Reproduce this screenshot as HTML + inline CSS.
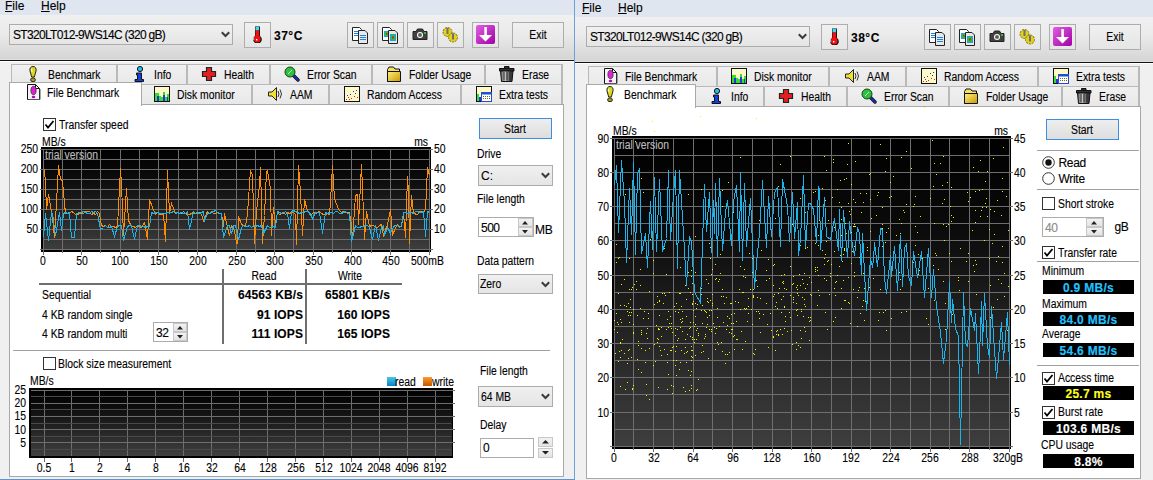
<!DOCTYPE html><html><head><meta charset="utf-8"><style>
html,body{margin:0;padding:0;}
body{width:1153px;height:480px;overflow:hidden;position:relative;background:#f0f0f0;font-family:"Liberation Sans",sans-serif;}
.r{position:absolute;display:block;}
.t{position:absolute;white-space:nowrap;line-height:normal;font-family:"Liberation Sans",sans-serif;-webkit-text-stroke:0.12px currentColor;}
</style></head><body>
<div class="r" style="left:0px;top:0px;width:574px;height:15px;background:#dfe6f0;"></div>
<div class="t" style="left:5px;top:-1px;font-size:12px;color:#000;"><u>F</u>ile</div>
<div class="t" style="left:41px;top:-1px;font-size:12px;color:#000;"><u>H</u>elp</div>
<div class="r" style="left:0px;top:15px;width:574px;height:44px;background:linear-gradient(#f0f0f0 0%,#ebebeb 40%,#d5d5d5 100%);"></div>
<div class="r" style="left:0px;top:59px;width:574px;height:1px;background:#e0e0e0;"></div>
<div class="r" style="left:0px;top:60px;width:574px;height:1px;background:#111;"></div>
<div class="r" style="left:0px;top:61px;width:574px;height:1px;background:#fff;"></div>
<div class="r" style="left:0px;top:62px;width:574px;height:418px;background:#f0f0f0;"></div>
<div class="r" style="left:9px;top:24px;width:224px;height:21px;box-sizing:border-box;border:1px solid #acacac;background:linear-gradient(#f0f0f0,#e5e5e5);"></div>
<div class="t" style="left:13px;top:28px;font-size:12px;color:#000;letter-spacing:-0.68px;">ST320LT012-9WS14C (320 gB)</div>
<svg class="r" style="left:221px;top:31px;" width="9" height="7" viewBox="0 0 9 7"><path d="M0.8 1.3 L4.5 5 L8.2 1.3" fill="none" stroke="#3a3a3a" stroke-width="2"/></svg>
<div class="r" style="left:244px;top:22px;width:27px;height:26px;box-sizing:border-box;border:1px solid #adadad;background:linear-gradient(#f0f0f0,#e5e5e5);"></div>
<svg class="r" style="left:252px;top:26px;" width="11" height="17" viewBox="0 0 11 17"><path d="M3 0.5 H8 V10 A4.3 4.3 0 1 1 3 10 Z" fill="#111"/><rect x="3.5" y="1" width="3.6" height="3.5" fill="#30e0f0"/><rect x="3.5" y="4.5" width="3.6" height="7" fill="#f01010"/><circle cx="5.2" cy="13" r="3.4" fill="#f01010"/><path d="M1.6 11.5 L1.6 14" stroke="#60e0f0" stroke-width="1"/><rect x="4" y="13" width="1.4" height="1.4" fill="#fff"/></svg>
<div class="t" style="left:274px;top:29px;font-size:12px;color:#000;font-weight:bold;letter-spacing:0.5px;">37°C</div>
<div class="r" style="left:347px;top:22px;width:27px;height:26px;box-sizing:border-box;border:1px solid #adadad;background:linear-gradient(#f0f0f0,#e5e5e5);"></div>
<svg class="r" style="left:352px;top:26px;" width="17" height="19" viewBox="0 0 17 19"><path d="M0.5 1.5 H7.5 L9.5 3.5 V14.5 H0.5 Z" fill="#fff" stroke="#222" stroke-width="1"/><path d="M2 5.5 H6 M2 7.5 H6 M2 9.5 H6" stroke="#2080e0" stroke-width="1"/><path d="M6.5 4.5 H13 L15.5 7 V17.5 H6.5 Z" fill="#e8e8e8" stroke="#222" stroke-width="1"/><path d="M8 9.5 H14 M8 11.5 H14 M8 13.5 H14" stroke="#2080e0" stroke-width="1"/></svg>
<div class="r" style="left:377px;top:22px;width:27px;height:26px;box-sizing:border-box;border:1px solid #adadad;background:linear-gradient(#f0f0f0,#e5e5e5);"></div>
<svg class="r" style="left:382px;top:26px;" width="17" height="19" viewBox="0 0 17 19"><path d="M0.5 1.5 H7.5 L9.5 3.5 V14.5 H0.5 Z" fill="#fff" stroke="#222" stroke-width="1"/><rect x="2" y="5" width="5" height="6" fill="#20a0e0"/><rect x="3" y="6" width="3" height="4" fill="#30c030"/><rect x="4" y="7" width="1.5" height="1.5" fill="#e02020"/><path d="M6.5 4.5 H13 L15.5 7 V17.5 H6.5 Z" fill="#e8e8e8" stroke="#222" stroke-width="1"/><rect x="8" y="8" width="6" height="7" fill="#20a0e0"/><rect x="9" y="9" width="4" height="5" fill="#30c030"/><rect x="10" y="10.5" width="2" height="2" fill="#e02020"/></svg>
<div class="r" style="left:407px;top:22px;width:27px;height:26px;box-sizing:border-box;border:1px solid #adadad;background:linear-gradient(#f0f0f0,#e5e5e5);"></div>
<svg class="r" style="left:412px;top:26px;" width="17" height="19" viewBox="0 0 17 19"><path d="M1 5.5 H4 L5.5 3 H10.5 L12 5.5 H15 V13.5 H1 Z" fill="#404040" stroke="#222" stroke-width="1"/><circle cx="8" cy="9" r="3" fill="#fff"/><circle cx="8" cy="9" r="2" fill="#606060"/><circle cx="13" cy="7" r="1" fill="#30e030"/></svg>
<div class="r" style="left:437px;top:22px;width:27px;height:26px;box-sizing:border-box;border:1px solid #adadad;background:linear-gradient(#f0f0f0,#e5e5e5);"></div>
<svg class="r" style="left:442px;top:26px;" width="17" height="19" viewBox="0 0 17 19"><circle cx="5.5" cy="6" r="4.5" fill="#e0d020" stroke="#807010" stroke-width="1" stroke-dasharray="2 1"/><circle cx="11" cy="11.5" r="4.5" fill="#e0d020" stroke="#807010" stroke-width="1" stroke-dasharray="2 1"/><path d="M5.5 2 V8 M11 7.5 V13.5" stroke="#707070" stroke-width="2"/></svg>
<div class="r" style="left:472px;top:22px;width:27px;height:26px;box-sizing:border-box;border:1px solid #adadad;background:linear-gradient(#f0f0f0,#e5e5e5);"></div>
<svg class="r" style="left:476px;top:25px;" width="19" height="19" viewBox="0 0 19 19"><defs><linearGradient id="pg" x1="0" y1="0" x2="1" y2="1"><stop offset="0" stop-color="#e060e0"/><stop offset="1" stop-color="#a000a8"/></linearGradient></defs><rect x="0" y="0" width="19" height="19" rx="2" fill="url(#pg)"/><rect x="8.3" y="2" width="2.6" height="9" fill="#fff"/><path d="M3 10 H16 L9.5 16.5 Z" fill="#fff"/></svg>
<div class="r" style="left:512px;top:22px;width:52px;height:26px;box-sizing:border-box;border:1px solid #adadad;background:linear-gradient(#f0f0f0,#e5e5e5);"></div>
<div class="t" style="left:338px;width:400px;text-align:center;top:28px;font-size:12px;color:#000;transform:scaleX(0.865);transform-origin:center top;">Exit</div>
<div class="r" style="left:11px;top:64px;width:107px;height:21px;box-sizing:border-box;border:1px solid #b9b9b9;border-bottom:none;background:linear-gradient(#f0f0f0,#e8e8e8);"></div>
<div class="r" style="left:116px;top:64px;width:1px;height:21px;background:#b9b9b9;"></div>
<svg class="r" style="left:25px;top:66px;" width="16" height="16" viewBox="0 0 16 16"><path d="M8 0.5 C10.5 0.5 11.5 2.5 11 5 L9.3 11 H6.7 L5 5 C4.5 2.5 5.5 0.5 8 0.5 Z" fill="#dcd820" stroke="#222" stroke-width="1"/><path d="M6.5 3 L7 6" stroke="#fffff0" stroke-width="1"/><ellipse cx="8" cy="13.8" rx="2.4" ry="1.9" fill="#aaa010" stroke="#222" stroke-width="1"/></svg>
<div class="t" style="left:47.5px;top:68px;font-size:12px;color:#000;transform:scaleX(0.865);transform-origin:left top;">Benchmark</div>
<div class="r" style="left:117px;top:64px;width:71px;height:21px;box-sizing:border-box;border:1px solid #b9b9b9;border-bottom:none;background:linear-gradient(#f0f0f0,#e8e8e8);"></div>
<div class="r" style="left:186px;top:64px;width:1px;height:21px;background:#b9b9b9;"></div>
<svg class="r" style="left:131px;top:66px;" width="16" height="16" viewBox="0 0 16 16"><circle cx="9" cy="3" r="2.6" fill="#20c0f0" stroke="#111" stroke-width="1"/><path d="M5.5 7 H10.5 V13.5 H12.5 V15.5 H4 V13.5 H6.5 V9 H5.5 Z" fill="#1040e0" stroke="#111" stroke-width="1"/></svg>
<div class="t" style="left:153.5px;top:68px;font-size:12px;color:#000;transform:scaleX(0.865);transform-origin:left top;">Info</div>
<div class="r" style="left:187px;top:64px;width:84px;height:21px;box-sizing:border-box;border:1px solid #b9b9b9;border-bottom:none;background:linear-gradient(#f0f0f0,#e8e8e8);"></div>
<div class="r" style="left:269px;top:64px;width:1px;height:21px;background:#b9b9b9;"></div>
<svg class="r" style="left:201px;top:66px;" width="16" height="16" viewBox="0 0 16 16"><path d="M5.5 1.5 H10.5 V5.5 H14.5 V10.5 H10.5 V14.5 H5.5 V10.5 H1.5 V5.5 H5.5 Z" fill="#e02020" stroke="#222" stroke-width="1.2"/></svg>
<div class="t" style="left:223.5px;top:68px;font-size:12px;color:#000;transform:scaleX(0.865);transform-origin:left top;">Health</div>
<div class="r" style="left:270px;top:64px;width:103px;height:21px;box-sizing:border-box;border:1px solid #b9b9b9;border-bottom:none;background:linear-gradient(#f0f0f0,#e8e8e8);"></div>
<div class="r" style="left:371px;top:64px;width:1px;height:21px;background:#b9b9b9;"></div>
<svg class="r" style="left:284px;top:66px;" width="16" height="16" viewBox="0 0 16 16"><path d="M8.5 8.5 L14 14" stroke="#111" stroke-width="3.4" stroke-linecap="round"/><path d="M8.5 8.5 L14 14" stroke="#1830b0" stroke-width="2" stroke-linecap="round"/><circle cx="6" cy="6" r="5" fill="#30c040" stroke="#184018" stroke-width="1"/><path d="M4 8 L8 4" stroke="#b0ffb0" stroke-width="1"/></svg>
<div class="t" style="left:306.5px;top:68px;font-size:12px;color:#000;transform:scaleX(0.865);transform-origin:left top;">Error Scan</div>
<div class="r" style="left:372px;top:64px;width:114px;height:21px;box-sizing:border-box;border:1px solid #b9b9b9;border-bottom:none;background:linear-gradient(#f0f0f0,#e8e8e8);"></div>
<div class="r" style="left:484px;top:64px;width:1px;height:21px;background:#b9b9b9;"></div>
<svg class="r" style="left:386px;top:66px;" width="16" height="16" viewBox="0 0 16 16"><defs><linearGradient id="fg" x1="0" y1="0" x2="1" y2="1"><stop offset="0" stop-color="#fff080"/><stop offset="1" stop-color="#c89800"/></linearGradient></defs><path d="M1.5 3.5 L3 1 H7.5 L9 3 H13.5 V15.5 H1.5 Z" fill="#f8e060" stroke="#111" stroke-width="1"/><path d="M1.5 5.5 H14.5 V15.5 H1.5 Z" fill="url(#fg)" stroke="#111" stroke-width="1"/></svg>
<div class="t" style="left:408.5px;top:68px;font-size:12px;color:#000;transform:scaleX(0.865);transform-origin:left top;">Folder Usage</div>
<div class="r" style="left:485px;top:64px;width:78px;height:21px;box-sizing:border-box;border:1px solid #b9b9b9;border-bottom:none;background:linear-gradient(#f0f0f0,#e8e8e8);"></div>
<div class="r" style="left:561px;top:64px;width:1px;height:21px;background:#b9b9b9;"></div>
<svg class="r" style="left:499px;top:66px;" width="16" height="16" viewBox="0 0 16 16"><defs><linearGradient id="tg" x1="0" x2="1"><stop offset="0" stop-color="#505050"/><stop offset="0.35" stop-color="#d0d0d0"/><stop offset="0.7" stop-color="#606060"/><stop offset="1" stop-color="#202020"/></linearGradient></defs><path d="M0.5 2.5 H15 V5 H0.5 Z" fill="#333" stroke="#111" stroke-width="1"/><path d="M5.5 0.5 H10 V2.5 H5.5 Z" fill="#333" stroke="#111" stroke-width="1"/><path d="M1.5 5 H14 L13 15.5 H2.5 Z" fill="url(#tg)" stroke="#111" stroke-width="1"/><path d="M5 6 V14.5 M8 6 V14.5 M11 6 V14.5" stroke="#222" stroke-width="1"/></svg>
<div class="t" style="left:521.5px;top:68px;font-size:12px;color:#000;transform:scaleX(0.865);transform-origin:left top;">Erase</div>
<div class="r" style="left:140px;top:84px;width:113px;height:21px;box-sizing:border-box;border:1px solid #b9b9b9;border-bottom:none;background:linear-gradient(#f0f0f0,#e8e8e8);"></div>
<div class="r" style="left:251px;top:84px;width:1px;height:21px;background:#b9b9b9;"></div>
<svg class="r" style="left:154px;top:86px;" width="16" height="16" viewBox="0 0 16 16"><rect x="0.5" y="0.5" width="15" height="15" fill="#fdfac8" stroke="#111" stroke-width="1"/><path d="M1 7 V15 H15 V8 H13 V11 H11 V6 H9 V11 H7 V10 H5 V7 Z" fill="#30e030"/><path d="M3 15 V10 H5 V15 M9 15 V9 H11 V15 M13 15 V11 H14 V15" fill="#3030e0"/><rect x="0.5" y="0.5" width="15" height="15" fill="none" stroke="#111" stroke-width="1"/></svg>
<div class="t" style="left:176.5px;top:88px;font-size:12px;color:#000;transform:scaleX(0.865);transform-origin:left top;">Disk monitor</div>
<div class="r" style="left:252px;top:84px;width:78px;height:21px;box-sizing:border-box;border:1px solid #b9b9b9;border-bottom:none;background:linear-gradient(#f0f0f0,#e8e8e8);"></div>
<div class="r" style="left:328px;top:84px;width:1px;height:21px;background:#b9b9b9;"></div>
<svg class="r" style="left:267px;top:86px;" width="16" height="16" viewBox="0 0 16 16"><path d="M1.5 6 H5 L9.5 1.5 V14.5 L5 10 H1.5 Z" fill="#f0e030" stroke="#222" stroke-width="1"/><path d="M11 5 Q13 8 11 11 M13 3.5 Q16 8 13 12.5" fill="none" stroke="#333" stroke-width="1"/></svg>
<div class="t" style="left:289.5px;top:88px;font-size:12px;color:#000;transform:scaleX(0.865);transform-origin:left top;">AAM</div>
<div class="r" style="left:329px;top:84px;width:133px;height:21px;box-sizing:border-box;border:1px solid #b9b9b9;border-bottom:none;background:linear-gradient(#f0f0f0,#e8e8e8);"></div>
<div class="r" style="left:460px;top:84px;width:1px;height:21px;background:#b9b9b9;"></div>
<svg class="r" style="left:344px;top:86px;" width="16" height="16" viewBox="0 0 16 16"><rect x="0.5" y="0.5" width="15" height="15" fill="#fdfac8" stroke="#111" stroke-width="1"/><g fill="#2030e0"><rect x="3" y="9" width="1" height="1"/><rect x="6" y="8" width="1" height="1"/><rect x="9" y="5" width="1" height="1"/><rect x="12" y="4" width="1" height="1"/><rect x="11" y="7" width="1" height="1"/></g><g fill="#e02020"><rect x="2" y="13" width="1" height="1"/><rect x="4" y="11" width="1" height="1"/><rect x="7" y="12" width="1" height="1"/><rect x="10" y="10" width="1" height="1"/><rect x="13" y="11" width="1" height="1"/><rect x="5" y="13" width="1" height="1"/></g></svg>
<div class="t" style="left:366.5px;top:88px;font-size:12px;color:#000;transform:scaleX(0.865);transform-origin:left top;">Random Access</div>
<div class="r" style="left:461px;top:84px;width:102px;height:21px;box-sizing:border-box;border:1px solid #b9b9b9;border-bottom:none;background:linear-gradient(#f0f0f0,#e8e8e8);"></div>
<div class="r" style="left:561px;top:84px;width:1px;height:21px;background:#b9b9b9;"></div>
<svg class="r" style="left:476px;top:86px;" width="16" height="16" viewBox="0 0 16 16"><rect x="0.5" y="0.5" width="15" height="15" fill="#fdfac8" stroke="#111" stroke-width="1"/><path d="M1 8 H3 V15 H1 Z" fill="#30e030"/><path d="M3 11 H5 V15 H3 Z" fill="#3030e0"/><rect x="5.5" y="6.5" width="10" height="9" fill="#fff" stroke="#2050d0" stroke-width="1"/><rect x="5.5" y="6.5" width="10" height="2" fill="#2050d0"/><g fill="#e02020"><rect x="7" y="10" width="1" height="1"/><rect x="11" y="10" width="1" height="1"/><rect x="9" y="12" width="1" height="1"/><rect x="13" y="12" width="1" height="1"/></g><g fill="#20a020"><rect x="9" y="10" width="1" height="1"/><rect x="13" y="10" width="1" height="1"/><rect x="7" y="12" width="1" height="1"/><rect x="11" y="12" width="1" height="1"/></g></svg>
<div class="t" style="left:498.5px;top:88px;font-size:12px;color:#000;transform:scaleX(0.865);transform-origin:left top;">Extra tests</div>
<div class="r" style="left:9px;top:104px;width:555px;height:373px;box-sizing:border-box;border:1px solid #a8a8a8;background:#fff;"></div>
<div class="r" style="left:9px;top:82px;width:133px;height:24px;box-sizing:border-box;border:1px solid #a9a9a9;border-bottom:none;background:#fff;"></div>
<svg class="r" style="left:25px;top:84px;" width="16" height="16" viewBox="0 0 16 16"><path d="M2.5 0.5 H10.5 L14.5 4.5 V15.5 H2.5 Z" fill="#f4f4f4" stroke="#111" stroke-width="1"/><path d="M10.5 0.5 V4.5 H14.5" fill="none" stroke="#111" stroke-width="1"/><ellipse cx="8.5" cy="6.5" rx="2.6" ry="4.2" fill="#e020d8" stroke="#333" stroke-width="0.8"/><ellipse cx="8.5" cy="13" rx="1.8" ry="1.2" fill="#b010b0"/><path d="M3.5 15.5 H15 V5" fill="none" stroke="#555" stroke-width="1"/></svg>
<div class="t" style="left:47.0px;top:85.5px;font-size:12px;color:#000;transform:scaleX(0.865);transform-origin:left top;">File Benchmark</div>
<div class="r" style="left:43px;top:118px;width:13px;height:13px;box-sizing:border-box;border:1px solid #333;background:#fff;"></div>
<svg class="r" style="left:43px;top:118px;" width="13" height="13" viewBox="0 0 13 13"><path d="M2.5 6.5 L5 9.5 L10.5 3" fill="none" stroke="#000" stroke-width="1.8"/></svg>
<div class="t" style="left:59px;top:118px;font-size:12px;color:#000;transform:scaleX(0.865);transform-origin:left top;">Transfer speed</div>
<div class="t" style="left:42px;top:135px;font-size:12px;color:#000;transform:scaleX(0.865);transform-origin:left top;">MB/s</div>
<div class="t" style="left:28px;width:400px;text-align:right;top:135px;font-size:12px;color:#000;transform:scaleX(0.865);transform-origin:right top;">ms</div>
<div class="r" style="left:41px;top:147px;width:390px;height:105px;background:#000;"></div>
<div class="r" style="left:43px;top:149px;width:387px;height:101px;background:linear-gradient(#000 0%,#0c0c0c 30%,#3e3e3e 100%);"></div>
<svg class="r" style="left:0px;top:0px;" width="480" height="260" viewBox="0 0 480 260"><rect x="43" y="149" width="1" height="106" fill="#6e6e6e"/><rect x="62" y="149" width="1" height="104" fill="#6e6e6e"/><rect x="81" y="149" width="1" height="106" fill="#6e6e6e"/><rect x="100" y="149" width="1" height="104" fill="#6e6e6e"/><rect x="120" y="149" width="1" height="106" fill="#6e6e6e"/><rect x="139" y="149" width="1" height="104" fill="#6e6e6e"/><rect x="158" y="149" width="1" height="106" fill="#6e6e6e"/><rect x="178" y="149" width="1" height="104" fill="#6e6e6e"/><rect x="197" y="149" width="1" height="106" fill="#6e6e6e"/><rect x="216" y="149" width="1" height="104" fill="#6e6e6e"/><rect x="236" y="149" width="1" height="106" fill="#6e6e6e"/><rect x="255" y="149" width="1" height="104" fill="#6e6e6e"/><rect x="274" y="149" width="1" height="106" fill="#6e6e6e"/><rect x="293" y="149" width="1" height="104" fill="#6e6e6e"/><rect x="313" y="149" width="1" height="106" fill="#6e6e6e"/><rect x="332" y="149" width="1" height="104" fill="#6e6e6e"/><rect x="351" y="149" width="1" height="106" fill="#6e6e6e"/><rect x="371" y="149" width="1" height="104" fill="#6e6e6e"/><rect x="390" y="149" width="1" height="106" fill="#6e6e6e"/><rect x="409" y="149" width="1" height="104" fill="#6e6e6e"/><rect x="429" y="149" width="1" height="106" fill="#6e6e6e"/><rect x="40" y="149" width="393" height="1" fill="#6e6e6e"/><rect x="43" y="159" width="387" height="1" fill="#6e6e6e"/><rect x="40" y="169" width="393" height="1" fill="#6e6e6e"/><rect x="43" y="179" width="387" height="1" fill="#6e6e6e"/><rect x="40" y="189" width="393" height="1" fill="#6e6e6e"/><rect x="43" y="199" width="387" height="1" fill="#6e6e6e"/><rect x="40" y="209" width="393" height="1" fill="#6e6e6e"/><rect x="43" y="219" width="387" height="1" fill="#6e6e6e"/><rect x="40" y="229" width="393" height="1" fill="#6e6e6e"/><rect x="43" y="239" width="387" height="1" fill="#6e6e6e"/><rect x="40" y="249" width="393" height="1" fill="#6e6e6e"/></svg>
<div class="r" style="left:41px;top:250px;width:390px;height:2px;background:#000;"></div>
<div class="r" style="left:43px;top:250px;width:1px;height:5px;background:#6e6e6e;"></div>
<div class="r" style="left:62px;top:250px;width:1px;height:3px;background:#6e6e6e;"></div>
<div class="r" style="left:81px;top:250px;width:1px;height:5px;background:#6e6e6e;"></div>
<div class="r" style="left:100px;top:250px;width:1px;height:3px;background:#6e6e6e;"></div>
<div class="r" style="left:120px;top:250px;width:1px;height:5px;background:#6e6e6e;"></div>
<div class="r" style="left:139px;top:250px;width:1px;height:3px;background:#6e6e6e;"></div>
<div class="r" style="left:158px;top:250px;width:1px;height:5px;background:#6e6e6e;"></div>
<div class="r" style="left:178px;top:250px;width:1px;height:3px;background:#6e6e6e;"></div>
<div class="r" style="left:197px;top:250px;width:1px;height:5px;background:#6e6e6e;"></div>
<div class="r" style="left:216px;top:250px;width:1px;height:3px;background:#6e6e6e;"></div>
<div class="r" style="left:236px;top:250px;width:1px;height:5px;background:#6e6e6e;"></div>
<div class="r" style="left:255px;top:250px;width:1px;height:3px;background:#6e6e6e;"></div>
<div class="r" style="left:274px;top:250px;width:1px;height:5px;background:#6e6e6e;"></div>
<div class="r" style="left:293px;top:250px;width:1px;height:3px;background:#6e6e6e;"></div>
<div class="r" style="left:313px;top:250px;width:1px;height:5px;background:#6e6e6e;"></div>
<div class="r" style="left:332px;top:250px;width:1px;height:3px;background:#6e6e6e;"></div>
<div class="r" style="left:351px;top:250px;width:1px;height:5px;background:#6e6e6e;"></div>
<div class="r" style="left:371px;top:250px;width:1px;height:3px;background:#6e6e6e;"></div>
<div class="r" style="left:390px;top:250px;width:1px;height:5px;background:#6e6e6e;"></div>
<div class="r" style="left:409px;top:250px;width:1px;height:3px;background:#6e6e6e;"></div>
<div class="r" style="left:429px;top:250px;width:1px;height:5px;background:#6e6e6e;"></div>
<div class="t" style="left:45px;top:148px;font-size:12px;color:#bdbdbd;transform:scaleX(0.865);transform-origin:left top;">trial version</div>
<svg class="r" style="left:0px;top:0px;" width="480" height="260" viewBox="0 0 480 260"><clipPath id="lc"><rect x="43" y="149" width="388" height="101"/></clipPath><g clip-path="url(#lc)"><polyline fill="none" stroke="#ff8c00" stroke-width="1.0" shape-rendering="crispEdges" points="44.5,169.5 45.5,184.5 46.5,209.5 48.5,194.5 50.5,205.5 52.5,218.5 54.5,237.5 57.5,184.5 58.5,165.5 60.5,179.5 62.5,180.5 63.5,192.5 65.5,213.5 69.5,213.5 71.5,211.5 73.5,212.5 75.5,214.5 77.5,214.5 79.5,213.5 81.5,213.5 83.5,213.5 85.5,211.5 87.5,211.5 89.5,211.5 91.5,214.5 93.5,213.5 95.5,214.5 97.5,211.5 99.5,213.5 101.5,225.5 103.5,226.5 105.5,225.5 107.5,227.5 109.5,224.5 111.5,226.5 113.5,226.5 115.5,227.5 117.5,226.5 120.5,168.5 121.5,184.5 123.5,235.5 126.5,188.5 128.5,220.5 131.5,226.5 133.5,226.5 135.5,227.5 137.5,225.5 139.5,226.5 141.5,227.5 144.5,222.5 147.5,239.5 149.5,199.5 152.5,207.5 155.5,214.5 157.5,212.5 159.5,214.5 161.5,214.5 163.5,213.5 165.5,241.5 167.5,170.5 169.5,213.5 171.5,203.5 175.5,213.5 177.5,212.5 179.5,213.5 181.5,213.5 183.5,211.5 185.5,213.5 187.5,214.5 189.5,214.5 191.5,213.5 193.5,212.5 195.5,213.5 197.5,213.5 199.5,212.5 201.5,214.5 203.5,220.5 207.5,211.5 209.5,213.5 211.5,211.5 213.5,213.5 215.5,213.5 217.5,212.5 219.5,213.5 221.5,213.5 223.5,226.5 224.5,213.5 227.5,227.5 229.5,235.5 231.5,225.5 234.5,230.5 236.5,243.5 237.5,243.5 238.5,216.5 241.5,224.5 243.5,225.5 245.5,226.5 247.5,213.5 249.5,184.5 250.5,170.5 252.5,175.5 254.5,243.5 256.5,211.5 259.5,184.5 260.5,167.5 262.5,243.5 264.5,215.5 266.5,171.5 267.5,170.5 270.5,188.5 271.5,235.5 273.5,207.5 275.5,224.5 277.5,212.5 279.5,214.5 281.5,213.5 283.5,212.5 285.5,214.5 287.5,212.5 289.5,213.5 291.5,212.5 293.5,212.5 295.5,214.5 296.5,244.5 298.5,165.5 300.5,192.5 302.5,235.5 304.5,199.5 306.5,207.5 309.5,214.5 311.5,214.5 313.5,212.5 315.5,213.5 317.5,212.5 319.5,211.5 321.5,213.5 323.5,214.5 325.5,214.5 327.5,213.5 329.5,214.5 330.5,201.5 332.5,165.5 334.5,198.5 338.5,209.5 341.5,212.5 343.5,211.5 345.5,212.5 347.5,212.5 349.5,212.5 351.5,225.5 352.5,239.5 355.5,195.5 357.5,194.5 358.5,224.5 361.5,164.5 363.5,213.5 364.5,239.5 366.5,211.5 369.5,226.5 371.5,225.5 373.5,225.5 375.5,227.5 377.5,227.5 379.5,225.5 381.5,224.5 383.5,235.5 387.5,224.5 390.5,209.5 392.5,235.5 395.5,227.5 397.5,224.5 399.5,226.5 401.5,226.5 403.5,212.5 405.5,237.5 407.5,176.5 408.5,192.5 409.5,243.5 411.5,195.5 413.5,213.5 417.5,214.5 419.5,211.5 421.5,211.5 423.5,212.5 425.5,209.5 427.5,167.5 429.5,175.5"/><polyline fill="none" stroke="#1cb4ec" stroke-width="1.0" shape-rendering="crispEdges" points="43.5,237.5 45.5,213.5 48.5,240.5 51.5,212.5 52.5,213.5 55.5,235.5 59.5,212.5 61.5,230.5 63.5,213.5 65.5,212.5 67.5,213.5 69.5,212.5 71.5,237.5 74.5,237.5 76.5,213.5 79.5,212.5 81.5,212.5 83.5,211.5 85.5,212.5 87.5,213.5 89.5,213.5 91.5,211.5 93.5,212.5 95.5,211.5 97.5,213.5 100.5,229.5 103.5,227.5 105.5,225.5 107.5,227.5 109.5,227.5 111.5,226.5 114.5,236.5 117.5,226.5 119.5,225.5 121.5,225.5 123.5,240.5 127.5,226.5 129.5,225.5 131.5,225.5 134.5,239.5 137.5,225.5 139.5,225.5 141.5,226.5 143.5,226.5 145.5,227.5 147.5,226.5 149.5,226.5 151.5,212.5 153.5,213.5 155.5,212.5 157.5,212.5 159.5,213.5 161.5,213.5 163.5,213.5 165.5,213.5 167.5,212.5 169.5,212.5 171.5,212.5 173.5,211.5 175.5,213.5 177.5,212.5 179.5,213.5 181.5,212.5 183.5,213.5 185.5,213.5 187.5,211.5 189.5,229.5 193.5,211.5 195.5,213.5 197.5,212.5 199.5,213.5 201.5,212.5 203.5,211.5 204.5,220.5 207.5,213.5 209.5,213.5 211.5,212.5 213.5,211.5 215.5,210.5 217.5,212.5 219.5,213.5 221.5,213.5 223.5,237.5 227.5,225.5 229.5,225.5 231.5,233.5 233.5,225.5 235.5,225.5 238.5,239.5 238.5,239.5 241.5,227.5 243.5,225.5 245.5,226.5 247.5,226.5 249.5,225.5 251.5,227.5 253.5,225.5 255.5,226.5 257.5,225.5 259.5,226.5 261.5,225.5 263.5,233.5 267.5,225.5 269.5,227.5 271.5,227.5 273.5,226.5 275.5,227.5 277.5,211.5 279.5,212.5 281.5,213.5 283.5,213.5 285.5,211.5 287.5,213.5 289.5,228.5 291.5,211.5 293.5,210.5 297.5,212.5 299.5,213.5 301.5,212.5 303.5,212.5 305.5,211.5 307.5,211.5 309.5,212.5 312.5,218.5 315.5,212.5 317.5,212.5 319.5,212.5 322.5,233.5 325.5,212.5 327.5,213.5 329.5,212.5 331.5,212.5 333.5,213.5 335.5,211.5 337.5,211.5 339.5,213.5 341.5,213.5 343.5,212.5 345.5,211.5 347.5,213.5 349.5,213.5 351.5,241.5 355.5,225.5 357.5,227.5 359.5,227.5 361.5,226.5 363.5,226.5 365.5,225.5 367.5,225.5 369.5,227.5 372.5,239.5 375.5,225.5 378.5,240.5 381.5,227.5 383.5,225.5 384.5,235.5 387.5,227.5 390.5,233.5 393.5,226.5 395.5,225.5 397.5,225.5 399.5,227.5 401.5,225.5 403.5,212.5 405.5,212.5 407.5,213.5 409.5,212.5 411.5,212.5 413.5,213.5 415.5,211.5 417.5,211.5 419.5,212.5 421.5,212.5 423.5,211.5 425.5,236.5 427.5,211.5 429.5,212.5"/></g></svg>
<div class="t" style="left:-362.5px;width:400px;text-align:right;top:142px;font-size:12px;color:#000;transform:scaleX(0.865);transform-origin:right top;">250</div>
<div class="t" style="left:-362.5px;width:400px;text-align:right;top:162px;font-size:12px;color:#000;transform:scaleX(0.865);transform-origin:right top;">200</div>
<div class="t" style="left:-362.5px;width:400px;text-align:right;top:182px;font-size:12px;color:#000;transform:scaleX(0.865);transform-origin:right top;">150</div>
<div class="t" style="left:-362.5px;width:400px;text-align:right;top:202px;font-size:12px;color:#000;transform:scaleX(0.865);transform-origin:right top;">100</div>
<div class="t" style="left:-362.5px;width:400px;text-align:right;top:222px;font-size:12px;color:#000;transform:scaleX(0.865);transform-origin:right top;">50</div>
<div class="t" style="left:434px;top:142px;font-size:12px;color:#000;transform:scaleX(0.865);transform-origin:left top;">50</div>
<div class="t" style="left:434px;top:162px;font-size:12px;color:#000;transform:scaleX(0.865);transform-origin:left top;">40</div>
<div class="t" style="left:434px;top:182px;font-size:12px;color:#000;transform:scaleX(0.865);transform-origin:left top;">30</div>
<div class="t" style="left:434px;top:202px;font-size:12px;color:#000;transform:scaleX(0.865);transform-origin:left top;">20</div>
<div class="t" style="left:434px;top:222px;font-size:12px;color:#000;transform:scaleX(0.865);transform-origin:left top;">10</div>
<div class="t" style="left:-157.0px;width:400px;text-align:center;top:253.5px;font-size:12px;color:#000;transform:scaleX(0.865);transform-origin:center top;">0</div>
<div class="t" style="left:-118.3px;width:400px;text-align:center;top:253.5px;font-size:12px;color:#000;transform:scaleX(0.865);transform-origin:center top;">50</div>
<div class="t" style="left:-79.6px;width:400px;text-align:center;top:253.5px;font-size:12px;color:#000;transform:scaleX(0.865);transform-origin:center top;">100</div>
<div class="t" style="left:-40.89999999999998px;width:400px;text-align:center;top:253.5px;font-size:12px;color:#000;transform:scaleX(0.865);transform-origin:center top;">150</div>
<div class="t" style="left:-2.1999999999999886px;width:400px;text-align:center;top:253.5px;font-size:12px;color:#000;transform:scaleX(0.865);transform-origin:center top;">200</div>
<div class="t" style="left:36.5px;width:400px;text-align:center;top:253.5px;font-size:12px;color:#000;transform:scaleX(0.865);transform-origin:center top;">250</div>
<div class="t" style="left:75.20000000000005px;width:400px;text-align:center;top:253.5px;font-size:12px;color:#000;transform:scaleX(0.865);transform-origin:center top;">300</div>
<div class="t" style="left:113.90000000000003px;width:400px;text-align:center;top:253.5px;font-size:12px;color:#000;transform:scaleX(0.865);transform-origin:center top;">350</div>
<div class="t" style="left:152.60000000000002px;width:400px;text-align:center;top:253.5px;font-size:12px;color:#000;transform:scaleX(0.865);transform-origin:center top;">400</div>
<div class="t" style="left:191.3px;width:400px;text-align:center;top:253.5px;font-size:12px;color:#000;transform:scaleX(0.865);transform-origin:center top;">450</div>
<div class="t" style="left:411px;top:253.5px;font-size:12px;color:#000;transform:scaleX(0.865);transform-origin:left top;">500mB</div>
<div class="r" style="left:39px;top:283px;width:363px;height:2px;background:#6e6e6e;"></div>
<div class="r" style="left:222px;top:269px;width:2px;height:75px;background:#6e6e6e;"></div>
<div class="r" style="left:305px;top:269px;width:2px;height:75px;background:#6e6e6e;"></div>
<div class="t" style="left:64px;width:400px;text-align:center;top:268.5px;font-size:12px;color:#000;transform:scaleX(0.865);transform-origin:center top;">Read</div>
<div class="t" style="left:150px;width:400px;text-align:center;top:268.5px;font-size:12px;color:#000;transform:scaleX(0.865);transform-origin:center top;">Write</div>
<div class="t" style="left:42px;top:288px;font-size:12px;color:#000;transform:scaleX(0.865);transform-origin:left top;">Sequential</div>
<div class="t" style="left:41.5px;top:308px;font-size:12px;color:#000;transform:scaleX(0.865);transform-origin:left top;">4 KB random single</div>
<div class="t" style="left:41.5px;top:326.5px;font-size:12px;color:#000;transform:scaleX(0.865);transform-origin:left top;">4 KB random multi</div>
<div class="r" style="left:153px;top:322px;width:35px;height:20px;box-sizing:border-box;border:1px solid #acacac;background:#fff;"></div>
<div class="t" style="left:156px;top:326px;font-size:12px;color:#000;letter-spacing:-0.5px;">32</div>
<div class="r" style="left:173px;top:323px;width:14px;height:9px;box-sizing:border-box;border:1px solid #c8c8c8;background:linear-gradient(#f2f2f2,#e4e4e4);"></div>
<div class="r" style="left:173px;top:332px;width:14px;height:9px;box-sizing:border-box;border:1px solid #c8c8c8;background:linear-gradient(#f2f2f2,#e4e4e4);"></div>
<svg class="r" style="left:176px;top:323px;" width="8" height="18" viewBox="0 0 8 18"><path d="M1 6.5 L4 3.0 L7 6.5 Z" fill="#222"/><path d="M1 12.0 L4 15.5 L7 12.0 Z" fill="#222"/></svg>
<div class="t" style="left:-97px;width:400px;text-align:right;top:288px;font-size:12px;color:#000;font-weight:bold;letter-spacing:0.1px;">64563 KB/s</div>
<div class="t" style="left:-10px;width:400px;text-align:right;top:288px;font-size:12px;color:#000;font-weight:bold;letter-spacing:0.1px;">65801 KB/s</div>
<div class="t" style="left:-97px;width:400px;text-align:right;top:308px;font-size:12px;color:#000;font-weight:bold;letter-spacing:0.1px;">91 IOPS</div>
<div class="t" style="left:-10px;width:400px;text-align:right;top:308px;font-size:12px;color:#000;font-weight:bold;letter-spacing:0.1px;">160 IOPS</div>
<div class="t" style="left:-97px;width:400px;text-align:right;top:326.5px;font-size:12px;color:#000;font-weight:bold;letter-spacing:0.1px;">111 IOPS</div>
<div class="t" style="left:-10px;width:400px;text-align:right;top:326.5px;font-size:12px;color:#000;font-weight:bold;letter-spacing:0.1px;">165 IOPS</div>
<div class="r" style="left:479px;top:118px;width:73px;height:21px;box-sizing:border-box;border:1px solid #3c8ee0;background:linear-gradient(#eeeeee,#dedede);"></div>
<div class="t" style="left:315px;width:400px;text-align:center;top:122px;font-size:12px;color:#000;transform:scaleX(0.865);transform-origin:center top;">Start</div>
<div class="t" style="left:477px;top:147px;font-size:12px;color:#000;transform:scaleX(0.865);transform-origin:left top;">Drive</div>
<div class="r" style="left:478px;top:165px;width:75px;height:21px;box-sizing:border-box;border:1px solid #acacac;background:linear-gradient(#f0f0f0,#e5e5e5);"></div>
<div class="t" style="left:481px;top:169px;font-size:12px;color:#000;">C:</div>
<svg class="r" style="left:541px;top:172px;" width="9" height="7" viewBox="0 0 9 7"><path d="M0.8 1.3 L4.5 5 L8.2 1.3" fill="none" stroke="#3a3a3a" stroke-width="2"/></svg>
<div class="t" style="left:477px;top:192px;font-size:12px;color:#000;transform:scaleX(0.865);transform-origin:left top;">File length</div>
<div class="r" style="left:478px;top:217px;width:56px;height:20px;box-sizing:border-box;border:1px solid #acacac;background:#fff;"></div>
<div class="t" style="left:481px;top:221px;font-size:12px;color:#000;letter-spacing:-0.5px;">500</div>
<div class="r" style="left:518px;top:218px;width:15px;height:9px;box-sizing:border-box;border:1px solid #c8c8c8;background:linear-gradient(#f2f2f2,#e4e4e4);"></div>
<div class="r" style="left:518px;top:227px;width:15px;height:9px;box-sizing:border-box;border:1px solid #c8c8c8;background:linear-gradient(#f2f2f2,#e4e4e4);"></div>
<svg class="r" style="left:521px;top:218px;" width="8" height="18" viewBox="0 0 8 18"><path d="M1 6.5 L4 3.0 L7 6.5 Z" fill="#222"/><path d="M1 12.0 L4 15.5 L7 12.0 Z" fill="#222"/></svg>
<div class="t" style="left:535px;top:223px;font-size:12px;color:#000;letter-spacing:-0.3px;">MB</div>
<div class="t" style="left:477px;top:254px;font-size:12px;color:#000;transform:scaleX(0.865);transform-origin:left top;">Data pattern</div>
<div class="r" style="left:478px;top:274px;width:75px;height:20px;box-sizing:border-box;border:1px solid #acacac;background:linear-gradient(#f0f0f0,#e5e5e5);"></div>
<div class="t" style="left:480px;top:277px;font-size:12px;color:#000;transform:scaleX(0.865);transform-origin:left top;">Zero</div>
<svg class="r" style="left:541px;top:281px;" width="9" height="7" viewBox="0 0 9 7"><path d="M0.8 1.3 L4.5 5 L8.2 1.3" fill="none" stroke="#3a3a3a" stroke-width="2"/></svg>
<div class="r" style="left:13px;top:350px;width:537px;height:1px;background:#a0a0a0;"></div>
<div class="r" style="left:43px;top:357px;width:13px;height:13px;box-sizing:border-box;border:1px solid #333;background:#fff;"></div>
<div class="t" style="left:58px;top:357px;font-size:12px;color:#000;transform:scaleX(0.865);transform-origin:left top;">Block size measurement</div>
<div class="t" style="left:30px;top:374px;font-size:12px;color:#000;transform:scaleX(0.865);transform-origin:left top;">MB/s</div>
<div class="r" style="left:387px;top:377px;width:9px;height:9px;background:linear-gradient(#40c8f0,#1080c0);"></div>
<div class="t" style="left:395px;top:375px;font-size:12px;color:#000;transform:scaleX(0.865);transform-origin:left top;">read</div>
<div class="r" style="left:423px;top:377px;width:9px;height:9px;background:linear-gradient(#ff9a30,#c05800);"></div>
<div class="t" style="left:431.5px;top:375px;font-size:12px;color:#000;transform:scaleX(0.865);transform-origin:left top;">write</div>
<div class="r" style="left:29px;top:388px;width:424px;height:70px;background:#000;"></div>
<div class="r" style="left:31px;top:390px;width:421px;height:66px;background:linear-gradient(#000 0%,#0c0c0c 25%,#404040 100%);"></div>
<svg class="r" style="left:0px;top:0px;" width="480" height="480" viewBox="0 0 480 480"><rect x="44" y="390" width="1" height="72" fill="#6e6e6e"/><rect x="71" y="390" width="1" height="72" fill="#6e6e6e"/><rect x="99" y="390" width="1" height="72" fill="#6e6e6e"/><rect x="127" y="390" width="1" height="72" fill="#6e6e6e"/><rect x="155" y="390" width="1" height="72" fill="#6e6e6e"/><rect x="183" y="390" width="1" height="72" fill="#6e6e6e"/><rect x="211" y="390" width="1" height="72" fill="#6e6e6e"/><rect x="239" y="390" width="1" height="72" fill="#6e6e6e"/><rect x="267" y="390" width="1" height="72" fill="#6e6e6e"/><rect x="295" y="390" width="1" height="72" fill="#6e6e6e"/><rect x="323" y="390" width="1" height="72" fill="#6e6e6e"/><rect x="351" y="390" width="1" height="72" fill="#6e6e6e"/><rect x="379" y="390" width="1" height="72" fill="#6e6e6e"/><rect x="407" y="390" width="1" height="72" fill="#6e6e6e"/><rect x="435" y="390" width="1" height="72" fill="#6e6e6e"/><rect x="31" y="390" width="424" height="1" fill="#6e6e6e"/><rect x="31" y="396" width="420" height="1" fill="#4a4a4a"/><rect x="31" y="403" width="424" height="1" fill="#6e6e6e"/><rect x="31" y="409" width="420" height="1" fill="#4a4a4a"/><rect x="31" y="416" width="424" height="1" fill="#6e6e6e"/><rect x="31" y="423" width="420" height="1" fill="#4a4a4a"/><rect x="31" y="429" width="424" height="1" fill="#6e6e6e"/><rect x="31" y="436" width="420" height="1" fill="#4a4a4a"/><rect x="31" y="442" width="424" height="1" fill="#6e6e6e"/><rect x="31" y="449" width="420" height="1" fill="#4a4a4a"/></svg>
<div class="r" style="left:29px;top:456px;width:424px;height:2px;background:#000;"></div>
<div class="t" style="left:-374px;width:400px;text-align:right;top:383.0px;font-size:12px;color:#000;transform:scaleX(0.865);transform-origin:right top;">25</div>
<div class="t" style="left:-374px;width:400px;text-align:right;top:396.2px;font-size:12px;color:#000;transform:scaleX(0.865);transform-origin:right top;">20</div>
<div class="t" style="left:-374px;width:400px;text-align:right;top:409.4px;font-size:12px;color:#000;transform:scaleX(0.865);transform-origin:right top;">15</div>
<div class="t" style="left:-374px;width:400px;text-align:right;top:422.6px;font-size:12px;color:#000;transform:scaleX(0.865);transform-origin:right top;">10</div>
<div class="t" style="left:-374px;width:400px;text-align:right;top:435.8px;font-size:12px;color:#000;transform:scaleX(0.865);transform-origin:right top;">5</div>
<div class="t" style="left:-156.0px;width:400px;text-align:center;top:460.5px;font-size:12px;color:#000;transform:scaleX(0.865);transform-origin:center top;">0.5</div>
<div class="t" style="left:-128.05px;width:400px;text-align:center;top:460.5px;font-size:12px;color:#000;transform:scaleX(0.865);transform-origin:center top;">1</div>
<div class="t" style="left:-100.1px;width:400px;text-align:center;top:460.5px;font-size:12px;color:#000;transform:scaleX(0.865);transform-origin:center top;">2</div>
<div class="t" style="left:-72.15px;width:400px;text-align:center;top:460.5px;font-size:12px;color:#000;transform:scaleX(0.865);transform-origin:center top;">4</div>
<div class="t" style="left:-44.19999999999999px;width:400px;text-align:center;top:460.5px;font-size:12px;color:#000;transform:scaleX(0.865);transform-origin:center top;">8</div>
<div class="t" style="left:-16.25px;width:400px;text-align:center;top:460.5px;font-size:12px;color:#000;transform:scaleX(0.865);transform-origin:center top;">16</div>
<div class="t" style="left:11.699999999999989px;width:400px;text-align:center;top:460.5px;font-size:12px;color:#000;transform:scaleX(0.865);transform-origin:center top;">32</div>
<div class="t" style="left:39.650000000000006px;width:400px;text-align:center;top:460.5px;font-size:12px;color:#000;transform:scaleX(0.865);transform-origin:center top;">64</div>
<div class="t" style="left:67.60000000000002px;width:400px;text-align:center;top:460.5px;font-size:12px;color:#000;transform:scaleX(0.865);transform-origin:center top;">128</div>
<div class="t" style="left:95.54999999999995px;width:400px;text-align:center;top:460.5px;font-size:12px;color:#000;transform:scaleX(0.865);transform-origin:center top;">256</div>
<div class="t" style="left:123.5px;width:400px;text-align:center;top:460.5px;font-size:12px;color:#000;transform:scaleX(0.865);transform-origin:center top;">512</div>
<div class="t" style="left:151.45px;width:400px;text-align:center;top:460.5px;font-size:12px;color:#000;transform:scaleX(0.865);transform-origin:center top;">1024</div>
<div class="t" style="left:179.39999999999998px;width:400px;text-align:center;top:460.5px;font-size:12px;color:#000;transform:scaleX(0.865);transform-origin:center top;">2048</div>
<div class="t" style="left:207.34999999999997px;width:400px;text-align:center;top:460.5px;font-size:12px;color:#000;transform:scaleX(0.865);transform-origin:center top;">4096</div>
<div class="t" style="left:235.3px;width:400px;text-align:center;top:460.5px;font-size:12px;color:#000;transform:scaleX(0.865);transform-origin:center top;">8192</div>
<div class="t" style="left:479.5px;top:364px;font-size:12px;color:#000;transform:scaleX(0.865);transform-origin:left top;">File length</div>
<div class="r" style="left:478px;top:386px;width:75px;height:21px;box-sizing:border-box;border:1px solid #acacac;background:linear-gradient(#f0f0f0,#e5e5e5);"></div>
<div class="t" style="left:481px;top:390px;font-size:12px;color:#000;transform:scaleX(0.865);transform-origin:left top;">64 MB</div>
<svg class="r" style="left:541px;top:393px;" width="9" height="7" viewBox="0 0 9 7"><path d="M0.8 1.3 L4.5 5 L8.2 1.3" fill="none" stroke="#3a3a3a" stroke-width="2"/></svg>
<div class="t" style="left:479.5px;top:418px;font-size:12px;color:#000;transform:scaleX(0.865);transform-origin:left top;">Delay</div>
<div class="r" style="left:480px;top:438px;width:54px;height:20px;box-sizing:border-box;border:1px solid #acacac;background:#fff;"></div>
<div class="t" style="left:483px;top:441px;font-size:12px;color:#000;">0</div>
<div class="r" style="left:538px;top:437px;width:15px;height:10px;box-sizing:border-box;border:1px solid #c8c8c8;background:linear-gradient(#f2f2f2,#e4e4e4);"></div>
<div class="r" style="left:538px;top:448px;width:15px;height:10px;box-sizing:border-box;border:1px solid #c8c8c8;background:linear-gradient(#f2f2f2,#e4e4e4);"></div>
<svg class="r" style="left:541px;top:437px;" width="9" height="21" viewBox="0 0 9 21"><path d="M1 6.5 L4.5 3 L8 6.5 Z M1 14 L4.5 17.5 L8 14 Z" fill="#222"/></svg>
<div class="r" style="left:575px;top:0px;width:578px;height:17px;background:#dfe6f0;"></div>
<div class="t" style="left:582px;top:1px;font-size:12px;color:#000;"><u>F</u>ile</div>
<div class="t" style="left:618px;top:1px;font-size:12px;color:#000;"><u>H</u>elp</div>
<div class="r" style="left:575px;top:17px;width:578px;height:44px;background:linear-gradient(#f0f0f0 0%,#ebebeb 40%,#d5d5d5 100%);"></div>
<div class="r" style="left:575px;top:61px;width:578px;height:1px;background:#e0e0e0;"></div>
<div class="r" style="left:575px;top:62px;width:578px;height:1px;background:#111;"></div>
<div class="r" style="left:575px;top:63px;width:578px;height:1px;background:#fff;"></div>
<div class="r" style="left:575px;top:64px;width:578px;height:416px;background:#f0f0f0;"></div>
<div class="r" style="left:586px;top:26px;width:224px;height:21px;box-sizing:border-box;border:1px solid #acacac;background:linear-gradient(#f0f0f0,#e5e5e5);"></div>
<div class="t" style="left:590px;top:30px;font-size:12px;color:#000;letter-spacing:-0.68px;">ST320LT012-9WS14C (320 gB)</div>
<svg class="r" style="left:798px;top:33px;" width="9" height="7" viewBox="0 0 9 7"><path d="M0.8 1.3 L4.5 5 L8.2 1.3" fill="none" stroke="#3a3a3a" stroke-width="2"/></svg>
<div class="r" style="left:821px;top:24px;width:27px;height:26px;box-sizing:border-box;border:1px solid #adadad;background:linear-gradient(#f0f0f0,#e5e5e5);"></div>
<svg class="r" style="left:829px;top:28px;" width="11" height="17" viewBox="0 0 11 17"><path d="M3 0.5 H8 V10 A4.3 4.3 0 1 1 3 10 Z" fill="#111"/><rect x="3.5" y="1" width="3.6" height="3.5" fill="#30e0f0"/><rect x="3.5" y="4.5" width="3.6" height="7" fill="#f01010"/><circle cx="5.2" cy="13" r="3.4" fill="#f01010"/><path d="M1.6 11.5 L1.6 14" stroke="#60e0f0" stroke-width="1"/><rect x="4" y="13" width="1.4" height="1.4" fill="#fff"/></svg>
<div class="t" style="left:851px;top:31px;font-size:12px;color:#000;font-weight:bold;letter-spacing:0.5px;">38°C</div>
<div class="r" style="left:924px;top:24px;width:27px;height:26px;box-sizing:border-box;border:1px solid #adadad;background:linear-gradient(#f0f0f0,#e5e5e5);"></div>
<svg class="r" style="left:929px;top:28px;" width="17" height="19" viewBox="0 0 17 19"><path d="M0.5 1.5 H7.5 L9.5 3.5 V14.5 H0.5 Z" fill="#fff" stroke="#222" stroke-width="1"/><path d="M2 5.5 H6 M2 7.5 H6 M2 9.5 H6" stroke="#2080e0" stroke-width="1"/><path d="M6.5 4.5 H13 L15.5 7 V17.5 H6.5 Z" fill="#e8e8e8" stroke="#222" stroke-width="1"/><path d="M8 9.5 H14 M8 11.5 H14 M8 13.5 H14" stroke="#2080e0" stroke-width="1"/></svg>
<div class="r" style="left:954px;top:24px;width:27px;height:26px;box-sizing:border-box;border:1px solid #adadad;background:linear-gradient(#f0f0f0,#e5e5e5);"></div>
<svg class="r" style="left:959px;top:28px;" width="17" height="19" viewBox="0 0 17 19"><path d="M0.5 1.5 H7.5 L9.5 3.5 V14.5 H0.5 Z" fill="#fff" stroke="#222" stroke-width="1"/><rect x="2" y="5" width="5" height="6" fill="#20a0e0"/><rect x="3" y="6" width="3" height="4" fill="#30c030"/><rect x="4" y="7" width="1.5" height="1.5" fill="#e02020"/><path d="M6.5 4.5 H13 L15.5 7 V17.5 H6.5 Z" fill="#e8e8e8" stroke="#222" stroke-width="1"/><rect x="8" y="8" width="6" height="7" fill="#20a0e0"/><rect x="9" y="9" width="4" height="5" fill="#30c030"/><rect x="10" y="10.5" width="2" height="2" fill="#e02020"/></svg>
<div class="r" style="left:984px;top:24px;width:27px;height:26px;box-sizing:border-box;border:1px solid #adadad;background:linear-gradient(#f0f0f0,#e5e5e5);"></div>
<svg class="r" style="left:989px;top:28px;" width="17" height="19" viewBox="0 0 17 19"><path d="M1 5.5 H4 L5.5 3 H10.5 L12 5.5 H15 V13.5 H1 Z" fill="#404040" stroke="#222" stroke-width="1"/><circle cx="8" cy="9" r="3" fill="#fff"/><circle cx="8" cy="9" r="2" fill="#606060"/><circle cx="13" cy="7" r="1" fill="#30e030"/></svg>
<div class="r" style="left:1014px;top:24px;width:27px;height:26px;box-sizing:border-box;border:1px solid #adadad;background:linear-gradient(#f0f0f0,#e5e5e5);"></div>
<svg class="r" style="left:1019px;top:28px;" width="17" height="19" viewBox="0 0 17 19"><circle cx="5.5" cy="6" r="4.5" fill="#e0d020" stroke="#807010" stroke-width="1" stroke-dasharray="2 1"/><circle cx="11" cy="11.5" r="4.5" fill="#e0d020" stroke="#807010" stroke-width="1" stroke-dasharray="2 1"/><path d="M5.5 2 V8 M11 7.5 V13.5" stroke="#707070" stroke-width="2"/></svg>
<div class="r" style="left:1049px;top:24px;width:27px;height:26px;box-sizing:border-box;border:1px solid #adadad;background:linear-gradient(#f0f0f0,#e5e5e5);"></div>
<svg class="r" style="left:1053px;top:27px;" width="19" height="19" viewBox="0 0 19 19"><defs><linearGradient id="pg" x1="0" y1="0" x2="1" y2="1"><stop offset="0" stop-color="#e060e0"/><stop offset="1" stop-color="#a000a8"/></linearGradient></defs><rect x="0" y="0" width="19" height="19" rx="2" fill="url(#pg)"/><rect x="8.3" y="2" width="2.6" height="9" fill="#fff"/><path d="M3 10 H16 L9.5 16.5 Z" fill="#fff"/></svg>
<div class="r" style="left:1089px;top:24px;width:52px;height:26px;box-sizing:border-box;border:1px solid #adadad;background:linear-gradient(#f0f0f0,#e5e5e5);"></div>
<div class="t" style="left:915px;width:400px;text-align:center;top:30px;font-size:12px;color:#000;transform:scaleX(0.865);transform-origin:center top;">Exit</div>
<div class="r" style="left:588px;top:66px;width:130px;height:21px;box-sizing:border-box;border:1px solid #b9b9b9;border-bottom:none;background:linear-gradient(#f0f0f0,#e8e8e8);"></div>
<div class="r" style="left:716px;top:66px;width:1px;height:21px;background:#b9b9b9;"></div>
<svg class="r" style="left:602px;top:68px;" width="16" height="16" viewBox="0 0 16 16"><path d="M2.5 0.5 H10.5 L14.5 4.5 V15.5 H2.5 Z" fill="#f4f4f4" stroke="#111" stroke-width="1"/><path d="M10.5 0.5 V4.5 H14.5" fill="none" stroke="#111" stroke-width="1"/><ellipse cx="8.5" cy="6.5" rx="2.6" ry="4.2" fill="#e020d8" stroke="#333" stroke-width="0.8"/><ellipse cx="8.5" cy="13" rx="1.8" ry="1.2" fill="#b010b0"/><path d="M3.5 15.5 H15 V5" fill="none" stroke="#555" stroke-width="1"/></svg>
<div class="t" style="left:624.5px;top:70px;font-size:12px;color:#000;transform:scaleX(0.865);transform-origin:left top;">File Benchmark</div>
<div class="r" style="left:717px;top:66px;width:113px;height:21px;box-sizing:border-box;border:1px solid #b9b9b9;border-bottom:none;background:linear-gradient(#f0f0f0,#e8e8e8);"></div>
<div class="r" style="left:828px;top:66px;width:1px;height:21px;background:#b9b9b9;"></div>
<svg class="r" style="left:731px;top:68px;" width="16" height="16" viewBox="0 0 16 16"><rect x="0.5" y="0.5" width="15" height="15" fill="#fdfac8" stroke="#111" stroke-width="1"/><path d="M1 7 V15 H15 V8 H13 V11 H11 V6 H9 V11 H7 V10 H5 V7 Z" fill="#30e030"/><path d="M3 15 V10 H5 V15 M9 15 V9 H11 V15 M13 15 V11 H14 V15" fill="#3030e0"/><rect x="0.5" y="0.5" width="15" height="15" fill="none" stroke="#111" stroke-width="1"/></svg>
<div class="t" style="left:753.5px;top:70px;font-size:12px;color:#000;transform:scaleX(0.865);transform-origin:left top;">Disk monitor</div>
<div class="r" style="left:829px;top:66px;width:78px;height:21px;box-sizing:border-box;border:1px solid #b9b9b9;border-bottom:none;background:linear-gradient(#f0f0f0,#e8e8e8);"></div>
<div class="r" style="left:905px;top:66px;width:1px;height:21px;background:#b9b9b9;"></div>
<svg class="r" style="left:844px;top:68px;" width="16" height="16" viewBox="0 0 16 16"><path d="M1.5 6 H5 L9.5 1.5 V14.5 L5 10 H1.5 Z" fill="#f0e030" stroke="#222" stroke-width="1"/><path d="M11 5 Q13 8 11 11 M13 3.5 Q16 8 13 12.5" fill="none" stroke="#333" stroke-width="1"/></svg>
<div class="t" style="left:866.5px;top:70px;font-size:12px;color:#000;transform:scaleX(0.865);transform-origin:left top;">AAM</div>
<div class="r" style="left:906px;top:66px;width:133px;height:21px;box-sizing:border-box;border:1px solid #b9b9b9;border-bottom:none;background:linear-gradient(#f0f0f0,#e8e8e8);"></div>
<div class="r" style="left:1037px;top:66px;width:1px;height:21px;background:#b9b9b9;"></div>
<svg class="r" style="left:921px;top:68px;" width="16" height="16" viewBox="0 0 16 16"><rect x="0.5" y="0.5" width="15" height="15" fill="#fdfac8" stroke="#111" stroke-width="1"/><g fill="#2030e0"><rect x="3" y="9" width="1" height="1"/><rect x="6" y="8" width="1" height="1"/><rect x="9" y="5" width="1" height="1"/><rect x="12" y="4" width="1" height="1"/><rect x="11" y="7" width="1" height="1"/></g><g fill="#e02020"><rect x="2" y="13" width="1" height="1"/><rect x="4" y="11" width="1" height="1"/><rect x="7" y="12" width="1" height="1"/><rect x="10" y="10" width="1" height="1"/><rect x="13" y="11" width="1" height="1"/><rect x="5" y="13" width="1" height="1"/></g></svg>
<div class="t" style="left:943.5px;top:70px;font-size:12px;color:#000;transform:scaleX(0.865);transform-origin:left top;">Random Access</div>
<div class="r" style="left:1038px;top:66px;width:102px;height:21px;box-sizing:border-box;border:1px solid #b9b9b9;border-bottom:none;background:linear-gradient(#f0f0f0,#e8e8e8);"></div>
<div class="r" style="left:1138px;top:66px;width:1px;height:21px;background:#b9b9b9;"></div>
<svg class="r" style="left:1053px;top:68px;" width="16" height="16" viewBox="0 0 16 16"><rect x="0.5" y="0.5" width="15" height="15" fill="#fdfac8" stroke="#111" stroke-width="1"/><path d="M1 8 H3 V15 H1 Z" fill="#30e030"/><path d="M3 11 H5 V15 H3 Z" fill="#3030e0"/><rect x="5.5" y="6.5" width="10" height="9" fill="#fff" stroke="#2050d0" stroke-width="1"/><rect x="5.5" y="6.5" width="10" height="2" fill="#2050d0"/><g fill="#e02020"><rect x="7" y="10" width="1" height="1"/><rect x="11" y="10" width="1" height="1"/><rect x="9" y="12" width="1" height="1"/><rect x="13" y="12" width="1" height="1"/></g><g fill="#20a020"><rect x="9" y="10" width="1" height="1"/><rect x="13" y="10" width="1" height="1"/><rect x="7" y="12" width="1" height="1"/><rect x="11" y="12" width="1" height="1"/></g></svg>
<div class="t" style="left:1075.5px;top:70px;font-size:12px;color:#000;transform:scaleX(0.865);transform-origin:left top;">Extra tests</div>
<div class="r" style="left:694px;top:86px;width:71px;height:21px;box-sizing:border-box;border:1px solid #b9b9b9;border-bottom:none;background:linear-gradient(#f0f0f0,#e8e8e8);"></div>
<div class="r" style="left:763px;top:86px;width:1px;height:21px;background:#b9b9b9;"></div>
<svg class="r" style="left:708px;top:88px;" width="16" height="16" viewBox="0 0 16 16"><circle cx="9" cy="3" r="2.6" fill="#20c0f0" stroke="#111" stroke-width="1"/><path d="M5.5 7 H10.5 V13.5 H12.5 V15.5 H4 V13.5 H6.5 V9 H5.5 Z" fill="#1040e0" stroke="#111" stroke-width="1"/></svg>
<div class="t" style="left:730.5px;top:90px;font-size:12px;color:#000;transform:scaleX(0.865);transform-origin:left top;">Info</div>
<div class="r" style="left:764px;top:86px;width:84px;height:21px;box-sizing:border-box;border:1px solid #b9b9b9;border-bottom:none;background:linear-gradient(#f0f0f0,#e8e8e8);"></div>
<div class="r" style="left:846px;top:86px;width:1px;height:21px;background:#b9b9b9;"></div>
<svg class="r" style="left:778px;top:88px;" width="16" height="16" viewBox="0 0 16 16"><path d="M5.5 1.5 H10.5 V5.5 H14.5 V10.5 H10.5 V14.5 H5.5 V10.5 H1.5 V5.5 H5.5 Z" fill="#e02020" stroke="#222" stroke-width="1.2"/></svg>
<div class="t" style="left:800.5px;top:90px;font-size:12px;color:#000;transform:scaleX(0.865);transform-origin:left top;">Health</div>
<div class="r" style="left:847px;top:86px;width:103px;height:21px;box-sizing:border-box;border:1px solid #b9b9b9;border-bottom:none;background:linear-gradient(#f0f0f0,#e8e8e8);"></div>
<div class="r" style="left:948px;top:86px;width:1px;height:21px;background:#b9b9b9;"></div>
<svg class="r" style="left:861px;top:88px;" width="16" height="16" viewBox="0 0 16 16"><path d="M8.5 8.5 L14 14" stroke="#111" stroke-width="3.4" stroke-linecap="round"/><path d="M8.5 8.5 L14 14" stroke="#1830b0" stroke-width="2" stroke-linecap="round"/><circle cx="6" cy="6" r="5" fill="#30c040" stroke="#184018" stroke-width="1"/><path d="M4 8 L8 4" stroke="#b0ffb0" stroke-width="1"/></svg>
<div class="t" style="left:883.5px;top:90px;font-size:12px;color:#000;transform:scaleX(0.865);transform-origin:left top;">Error Scan</div>
<div class="r" style="left:949px;top:86px;width:114px;height:21px;box-sizing:border-box;border:1px solid #b9b9b9;border-bottom:none;background:linear-gradient(#f0f0f0,#e8e8e8);"></div>
<div class="r" style="left:1061px;top:86px;width:1px;height:21px;background:#b9b9b9;"></div>
<svg class="r" style="left:963px;top:88px;" width="16" height="16" viewBox="0 0 16 16"><defs><linearGradient id="fg" x1="0" y1="0" x2="1" y2="1"><stop offset="0" stop-color="#fff080"/><stop offset="1" stop-color="#c89800"/></linearGradient></defs><path d="M1.5 3.5 L3 1 H7.5 L9 3 H13.5 V15.5 H1.5 Z" fill="#f8e060" stroke="#111" stroke-width="1"/><path d="M1.5 5.5 H14.5 V15.5 H1.5 Z" fill="url(#fg)" stroke="#111" stroke-width="1"/></svg>
<div class="t" style="left:985.5px;top:90px;font-size:12px;color:#000;transform:scaleX(0.865);transform-origin:left top;">Folder Usage</div>
<div class="r" style="left:1062px;top:86px;width:78px;height:21px;box-sizing:border-box;border:1px solid #b9b9b9;border-bottom:none;background:linear-gradient(#f0f0f0,#e8e8e8);"></div>
<div class="r" style="left:1138px;top:86px;width:1px;height:21px;background:#b9b9b9;"></div>
<svg class="r" style="left:1076px;top:88px;" width="16" height="16" viewBox="0 0 16 16"><defs><linearGradient id="tg" x1="0" x2="1"><stop offset="0" stop-color="#505050"/><stop offset="0.35" stop-color="#d0d0d0"/><stop offset="0.7" stop-color="#606060"/><stop offset="1" stop-color="#202020"/></linearGradient></defs><path d="M0.5 2.5 H15 V5 H0.5 Z" fill="#333" stroke="#111" stroke-width="1"/><path d="M5.5 0.5 H10 V2.5 H5.5 Z" fill="#333" stroke="#111" stroke-width="1"/><path d="M1.5 5 H14 L13 15.5 H2.5 Z" fill="url(#tg)" stroke="#111" stroke-width="1"/><path d="M5 6 V14.5 M8 6 V14.5 M11 6 V14.5" stroke="#222" stroke-width="1"/></svg>
<div class="t" style="left:1098.5px;top:90px;font-size:12px;color:#000;transform:scaleX(0.865);transform-origin:left top;">Erase</div>
<div class="r" style="left:586px;top:106px;width:555px;height:373px;box-sizing:border-box;border:1px solid #a8a8a8;background:#fff;"></div>
<div class="r" style="left:586px;top:84px;width:110px;height:24px;box-sizing:border-box;border:1px solid #a9a9a9;border-bottom:none;background:#fff;"></div>
<svg class="r" style="left:602px;top:86px;" width="16" height="16" viewBox="0 0 16 16"><path d="M8 0.5 C10.5 0.5 11.5 2.5 11 5 L9.3 11 H6.7 L5 5 C4.5 2.5 5.5 0.5 8 0.5 Z" fill="#dcd820" stroke="#222" stroke-width="1"/><path d="M6.5 3 L7 6" stroke="#fffff0" stroke-width="1"/><ellipse cx="8" cy="13.8" rx="2.4" ry="1.9" fill="#aaa010" stroke="#222" stroke-width="1"/></svg>
<div class="t" style="left:624.0px;top:87.5px;font-size:12px;color:#000;transform:scaleX(0.865);transform-origin:left top;">Benchmark</div>
<div class="r" style="left:612px;top:136px;width:399px;height:313px;background:#000;"></div>
<div class="r" style="left:614px;top:138px;width:396px;height:309px;background:linear-gradient(#000 0%,#0a0a0a 28%,#3e3e3e 100%);"></div>
<svg class="r" style="left:600px;top:0px;" width="420" height="460" viewBox="0 0 420 460"><rect x="14" y="138" width="1" height="314" fill="#6e6e6e"/><rect x="33" y="138" width="1" height="312" fill="#6e6e6e"/><rect x="53" y="138" width="1" height="314" fill="#6e6e6e"/><rect x="73" y="138" width="1" height="312" fill="#6e6e6e"/><rect x="93" y="138" width="1" height="314" fill="#6e6e6e"/><rect x="112" y="138" width="1" height="312" fill="#6e6e6e"/><rect x="132" y="138" width="1" height="314" fill="#6e6e6e"/><rect x="152" y="138" width="1" height="312" fill="#6e6e6e"/><rect x="172" y="138" width="1" height="314" fill="#6e6e6e"/><rect x="191" y="138" width="1" height="312" fill="#6e6e6e"/><rect x="211" y="138" width="1" height="314" fill="#6e6e6e"/><rect x="231" y="138" width="1" height="312" fill="#6e6e6e"/><rect x="251" y="138" width="1" height="314" fill="#6e6e6e"/><rect x="270" y="138" width="1" height="312" fill="#6e6e6e"/><rect x="290" y="138" width="1" height="314" fill="#6e6e6e"/><rect x="310" y="138" width="1" height="312" fill="#6e6e6e"/><rect x="330" y="138" width="1" height="314" fill="#6e6e6e"/><rect x="349" y="138" width="1" height="312" fill="#6e6e6e"/><rect x="369" y="138" width="1" height="314" fill="#6e6e6e"/><rect x="389" y="138" width="1" height="312" fill="#6e6e6e"/><rect x="409" y="138" width="1" height="314" fill="#6e6e6e"/><rect x="10" y="138" width="403" height="1" fill="#6e6e6e"/><rect x="14" y="155" width="396" height="1" fill="#6e6e6e"/><rect x="10" y="172" width="403" height="1" fill="#6e6e6e"/><rect x="14" y="189" width="396" height="1" fill="#6e6e6e"/><rect x="10" y="206" width="403" height="1" fill="#6e6e6e"/><rect x="14" y="223" width="396" height="1" fill="#6e6e6e"/><rect x="10" y="240" width="403" height="1" fill="#6e6e6e"/><rect x="14" y="257" width="396" height="1" fill="#6e6e6e"/><rect x="10" y="275" width="403" height="1" fill="#6e6e6e"/><rect x="14" y="292" width="396" height="1" fill="#6e6e6e"/><rect x="10" y="309" width="403" height="1" fill="#6e6e6e"/><rect x="14" y="326" width="396" height="1" fill="#6e6e6e"/><rect x="10" y="343" width="403" height="1" fill="#6e6e6e"/><rect x="14" y="360" width="396" height="1" fill="#6e6e6e"/><rect x="10" y="377" width="403" height="1" fill="#6e6e6e"/><rect x="14" y="394" width="396" height="1" fill="#6e6e6e"/><rect x="10" y="412" width="403" height="1" fill="#6e6e6e"/><rect x="14" y="429" width="396" height="1" fill="#6e6e6e"/><rect x="10" y="446" width="403" height="1" fill="#6e6e6e"/></svg>
<div class="r" style="left:612px;top:447px;width:399px;height:2px;background:#000;"></div>
<div class="r" style="left:614px;top:447px;width:1px;height:5px;background:#6e6e6e;"></div>
<div class="r" style="left:633px;top:447px;width:1px;height:3px;background:#6e6e6e;"></div>
<div class="r" style="left:653px;top:447px;width:1px;height:5px;background:#6e6e6e;"></div>
<div class="r" style="left:673px;top:447px;width:1px;height:3px;background:#6e6e6e;"></div>
<div class="r" style="left:693px;top:447px;width:1px;height:5px;background:#6e6e6e;"></div>
<div class="r" style="left:712px;top:447px;width:1px;height:3px;background:#6e6e6e;"></div>
<div class="r" style="left:732px;top:447px;width:1px;height:5px;background:#6e6e6e;"></div>
<div class="r" style="left:752px;top:447px;width:1px;height:3px;background:#6e6e6e;"></div>
<div class="r" style="left:772px;top:447px;width:1px;height:5px;background:#6e6e6e;"></div>
<div class="r" style="left:791px;top:447px;width:1px;height:3px;background:#6e6e6e;"></div>
<div class="r" style="left:811px;top:447px;width:1px;height:5px;background:#6e6e6e;"></div>
<div class="r" style="left:831px;top:447px;width:1px;height:3px;background:#6e6e6e;"></div>
<div class="r" style="left:851px;top:447px;width:1px;height:5px;background:#6e6e6e;"></div>
<div class="r" style="left:870px;top:447px;width:1px;height:3px;background:#6e6e6e;"></div>
<div class="r" style="left:890px;top:447px;width:1px;height:5px;background:#6e6e6e;"></div>
<div class="r" style="left:910px;top:447px;width:1px;height:3px;background:#6e6e6e;"></div>
<div class="r" style="left:930px;top:447px;width:1px;height:5px;background:#6e6e6e;"></div>
<div class="r" style="left:949px;top:447px;width:1px;height:3px;background:#6e6e6e;"></div>
<div class="r" style="left:969px;top:447px;width:1px;height:5px;background:#6e6e6e;"></div>
<div class="r" style="left:989px;top:447px;width:1px;height:3px;background:#6e6e6e;"></div>
<div class="r" style="left:1009px;top:447px;width:1px;height:5px;background:#6e6e6e;"></div>
<div class="t" style="left:616px;top:138px;font-size:12px;color:#bdbdbd;transform:scaleX(0.865);transform-origin:left top;">trial version</div>
<svg class="r" style="left:600px;top:0px;" width="420" height="460" viewBox="0 0 420 460"><g fill="#f4f400"><rect x="40" y="308" width="1" height="1"/><rect x="72" y="347" width="1" height="1"/><rect x="91" y="385" width="1" height="1"/><rect x="85" y="347" width="1" height="1"/><rect x="32" y="388" width="1" height="1"/><rect x="89" y="328" width="1" height="1"/><rect x="67" y="319" width="1" height="1"/><rect x="66" y="274" width="1" height="1"/><rect x="15" y="353" width="1" height="1"/><rect x="57" y="342" width="1" height="1"/><rect x="28" y="350" width="1" height="1"/><rect x="96" y="390" width="1" height="1"/><rect x="87" y="334" width="1" height="1"/><rect x="96" y="330" width="1" height="1"/><rect x="86" y="362" width="1" height="1"/><rect x="30" y="307" width="1" height="1"/><rect x="29" y="258" width="1" height="1"/><rect x="45" y="350" width="1" height="1"/><rect x="91" y="356" width="1" height="1"/><rect x="70" y="316" width="1" height="1"/><rect x="73" y="386" width="1" height="1"/><rect x="77" y="340" width="1" height="1"/><rect x="75" y="335" width="1" height="1"/><rect x="40" y="269" width="1" height="1"/><rect x="81" y="306" width="1" height="1"/><rect x="76" y="375" width="1" height="1"/><rect x="92" y="337" width="1" height="1"/><rect x="32" y="389" width="1" height="1"/><rect x="33" y="324" width="1" height="1"/><rect x="24" y="353" width="1" height="1"/><rect x="46" y="333" width="1" height="1"/><rect x="30" y="299" width="1" height="1"/><rect x="32" y="287" width="1" height="1"/><rect x="28" y="358" width="1" height="1"/><rect x="93" y="310" width="1" height="1"/><rect x="80" y="319" width="1" height="1"/><rect x="75" y="328" width="1" height="1"/><rect x="78" y="338" width="1" height="1"/><rect x="54" y="344" width="1" height="1"/><rect x="20" y="319" width="1" height="1"/><rect x="64" y="349" width="1" height="1"/><rect x="70" y="350" width="1" height="1"/><rect x="79" y="309" width="1" height="1"/><rect x="95" y="303" width="1" height="1"/><rect x="14" y="320" width="1" height="1"/><rect x="49" y="348" width="1" height="1"/><rect x="53" y="260" width="1" height="1"/><rect x="92" y="350" width="1" height="1"/><rect x="44" y="311" width="1" height="1"/><rect x="59" y="301" width="1" height="1"/><rect x="31" y="289" width="1" height="1"/><rect x="27" y="382" width="1" height="1"/><rect x="27" y="363" width="1" height="1"/><rect x="97" y="389" width="1" height="1"/><rect x="73" y="346" width="1" height="1"/><rect x="57" y="338" width="1" height="1"/><rect x="41" y="332" width="1" height="1"/><rect x="72" y="332" width="1" height="1"/><rect x="41" y="348" width="1" height="1"/><rect x="75" y="311" width="1" height="1"/><rect x="28" y="315" width="1" height="1"/><rect x="76" y="303" width="1" height="1"/><rect x="76" y="346" width="1" height="1"/><rect x="47" y="338" width="1" height="1"/><rect x="93" y="301" width="1" height="1"/><rect x="17" y="322" width="1" height="1"/><rect x="84" y="353" width="1" height="1"/><rect x="80" y="362" width="1" height="1"/><rect x="91" y="276" width="1" height="1"/><rect x="94" y="342" width="1" height="1"/><rect x="29" y="322" width="1" height="1"/><rect x="18" y="293" width="1" height="1"/><rect x="46" y="254" width="1" height="1"/><rect x="61" y="336" width="1" height="1"/><rect x="91" y="388" width="1" height="1"/><rect x="92" y="303" width="1" height="1"/><rect x="67" y="389" width="1" height="1"/><rect x="98" y="333" width="1" height="1"/><rect x="58" y="329" width="1" height="1"/><rect x="90" y="327" width="1" height="1"/><rect x="21" y="322" width="1" height="1"/><rect x="49" y="399" width="1" height="1"/><rect x="81" y="322" width="1" height="1"/><rect x="56" y="325" width="1" height="1"/><rect x="68" y="374" width="1" height="1"/><rect x="97" y="304" width="1" height="1"/><rect x="92" y="304" width="1" height="1"/><rect x="80" y="293" width="1" height="1"/><rect x="47" y="328" width="1" height="1"/><rect x="57" y="296" width="1" height="1"/><rect x="92" y="283" width="1" height="1"/><rect x="53" y="273" width="1" height="1"/><rect x="54" y="304" width="1" height="1"/><rect x="61" y="327" width="1" height="1"/><rect x="38" y="345" width="1" height="1"/><rect x="41" y="372" width="1" height="1"/><rect x="64" y="293" width="1" height="1"/><rect x="33" y="333" width="1" height="1"/><rect x="91" y="346" width="1" height="1"/><rect x="29" y="312" width="1" height="1"/><rect x="60" y="350" width="1" height="1"/><rect x="95" y="324" width="1" height="1"/><rect x="29" y="349" width="1" height="1"/><rect x="65" y="295" width="1" height="1"/><rect x="37" y="315" width="1" height="1"/><rect x="66" y="329" width="1" height="1"/><rect x="83" y="387" width="1" height="1"/><rect x="62" y="293" width="1" height="1"/><rect x="19" y="351" width="1" height="1"/><rect x="14" y="329" width="1" height="1"/><rect x="80" y="267" width="1" height="1"/><rect x="68" y="327" width="1" height="1"/><rect x="69" y="292" width="1" height="1"/><rect x="48" y="313" width="1" height="1"/><rect x="30" y="315" width="1" height="1"/><rect x="75" y="365" width="1" height="1"/><rect x="90" y="322" width="1" height="1"/><rect x="70" y="326" width="1" height="1"/><rect x="71" y="385" width="1" height="1"/><rect x="48" y="318" width="1" height="1"/><rect x="33" y="385" width="1" height="1"/><rect x="71" y="328" width="1" height="1"/><rect x="58" y="328" width="1" height="1"/><rect x="91" y="350" width="1" height="1"/><rect x="88" y="370" width="1" height="1"/><rect x="91" y="360" width="1" height="1"/><rect x="28" y="303" width="1" height="1"/><rect x="59" y="315" width="1" height="1"/><rect x="93" y="322" width="1" height="1"/><rect x="18" y="324" width="1" height="1"/><rect x="71" y="350" width="1" height="1"/><rect x="29" y="289" width="1" height="1"/><rect x="96" y="308" width="1" height="1"/><rect x="81" y="350" width="1" height="1"/><rect x="98" y="379" width="1" height="1"/><rect x="46" y="395" width="1" height="1"/><rect x="67" y="362" width="1" height="1"/><rect x="46" y="384" width="1" height="1"/><rect x="24" y="305" width="1" height="1"/><rect x="85" y="285" width="1" height="1"/><rect x="22" y="339" width="1" height="1"/><rect x="97" y="328" width="1" height="1"/><rect x="82" y="311" width="1" height="1"/><rect x="76" y="360" width="1" height="1"/><rect x="37" y="359" width="1" height="1"/><rect x="18" y="258" width="1" height="1"/><rect x="79" y="369" width="1" height="1"/><rect x="26" y="306" width="1" height="1"/><rect x="58" y="387" width="1" height="1"/><rect x="53" y="365" width="1" height="1"/><rect x="49" y="291" width="1" height="1"/><rect x="38" y="341" width="1" height="1"/><rect x="67" y="354" width="1" height="1"/><rect x="92" y="339" width="1" height="1"/><rect x="80" y="327" width="1" height="1"/><rect x="34" y="284" width="1" height="1"/><rect x="36" y="289" width="1" height="1"/><rect x="33" y="309" width="1" height="1"/><rect x="94" y="326" width="1" height="1"/><rect x="90" y="292" width="1" height="1"/><rect x="90" y="375" width="1" height="1"/><rect x="40" y="285" width="1" height="1"/><rect x="86" y="316" width="1" height="1"/><rect x="72" y="393" width="1" height="1"/><rect x="16" y="262" width="1" height="1"/><rect x="19" y="257" width="1" height="1"/><rect x="24" y="279" width="1" height="1"/><rect x="41" y="330" width="1" height="1"/><rect x="86" y="299" width="1" height="1"/><rect x="59" y="346" width="1" height="1"/><rect x="20" y="342" width="1" height="1"/><rect x="78" y="312" width="1" height="1"/><rect x="20" y="305" width="1" height="1"/><rect x="61" y="355" width="1" height="1"/><rect x="95" y="316" width="1" height="1"/><rect x="58" y="339" width="1" height="1"/><rect x="91" y="371" width="1" height="1"/><rect x="95" y="355" width="1" height="1"/><rect x="75" y="351" width="1" height="1"/><rect x="82" y="321" width="1" height="1"/><rect x="33" y="332" width="1" height="1"/><rect x="69" y="323" width="1" height="1"/><rect x="31" y="312" width="1" height="1"/><rect x="73" y="360" width="1" height="1"/><rect x="31" y="357" width="1" height="1"/><rect x="86" y="352" width="1" height="1"/><rect x="85" y="391" width="1" height="1"/><rect x="79" y="293" width="1" height="1"/><rect x="17" y="332" width="1" height="1"/><rect x="92" y="261" width="1" height="1"/><rect x="82" y="318" width="1" height="1"/><rect x="98" y="335" width="1" height="1"/><rect x="77" y="329" width="1" height="1"/><rect x="90" y="336" width="1" height="1"/><rect x="16" y="244" width="1" height="1"/><rect x="47" y="338" width="1" height="1"/><rect x="95" y="272" width="1" height="1"/><rect x="20" y="343" width="1" height="1"/><rect x="87" y="351" width="1" height="1"/><rect x="36" y="281" width="1" height="1"/><rect x="41" y="334" width="1" height="1"/><rect x="96" y="339" width="1" height="1"/><rect x="91" y="270" width="1" height="1"/><rect x="57" y="302" width="1" height="1"/><rect x="27" y="311" width="1" height="1"/><rect x="16" y="313" width="1" height="1"/><rect x="21" y="284" width="1" height="1"/><rect x="21" y="350" width="1" height="1"/><rect x="59" y="300" width="1" height="1"/><rect x="92" y="357" width="1" height="1"/><rect x="20" y="386" width="1" height="1"/><rect x="43" y="318" width="1" height="1"/><rect x="59" y="329" width="1" height="1"/><rect x="82" y="331" width="1" height="1"/><rect x="74" y="306" width="1" height="1"/><rect x="63" y="303" width="1" height="1"/><rect x="94" y="339" width="1" height="1"/><rect x="20" y="357" width="1" height="1"/><rect x="25" y="389" width="1" height="1"/><rect x="92" y="294" width="1" height="1"/><rect x="68" y="311" width="1" height="1"/><rect x="85" y="339" width="1" height="1"/><rect x="55" y="361" width="1" height="1"/><rect x="18" y="361" width="1" height="1"/><rect x="38" y="369" width="1" height="1"/><rect x="71" y="323" width="1" height="1"/><rect x="45" y="362" width="1" height="1"/><rect x="88" y="272" width="1" height="1"/><rect x="88" y="288" width="1" height="1"/><rect x="89" y="390" width="1" height="1"/><rect x="109" y="329" width="1" height="1"/><rect x="110" y="258" width="1" height="1"/><rect x="108" y="302" width="1" height="1"/><rect x="123" y="296" width="1" height="1"/><rect x="129" y="352" width="1" height="1"/><rect x="101" y="352" width="1" height="1"/><rect x="119" y="326" width="1" height="1"/><rect x="116" y="328" width="1" height="1"/><rect x="138" y="302" width="1" height="1"/><rect x="117" y="308" width="1" height="1"/><rect x="121" y="296" width="1" height="1"/><rect x="139" y="289" width="1" height="1"/><rect x="104" y="310" width="1" height="1"/><rect x="122" y="289" width="1" height="1"/><rect x="117" y="317" width="1" height="1"/><rect x="104" y="338" width="1" height="1"/><rect x="112" y="303" width="1" height="1"/><rect x="132" y="329" width="1" height="1"/><rect x="118" y="344" width="1" height="1"/><rect x="134" y="349" width="1" height="1"/><rect x="114" y="327" width="1" height="1"/><rect x="126" y="297" width="1" height="1"/><rect x="107" y="298" width="1" height="1"/><rect x="124" y="303" width="1" height="1"/><rect x="134" y="335" width="1" height="1"/><rect x="114" y="327" width="1" height="1"/><rect x="106" y="279" width="1" height="1"/><rect x="111" y="331" width="1" height="1"/><rect x="136" y="339" width="1" height="1"/><rect x="112" y="294" width="1" height="1"/><rect x="107" y="301" width="1" height="1"/><rect x="108" y="358" width="1" height="1"/><rect x="102" y="305" width="1" height="1"/><rect x="121" y="342" width="1" height="1"/><rect x="112" y="305" width="1" height="1"/><rect x="130" y="303" width="1" height="1"/><rect x="115" y="264" width="1" height="1"/><rect x="133" y="336" width="1" height="1"/><rect x="127" y="316" width="1" height="1"/><rect x="109" y="310" width="1" height="1"/><rect x="127" y="354" width="1" height="1"/><rect x="106" y="327" width="1" height="1"/><rect x="122" y="351" width="1" height="1"/><rect x="131" y="303" width="1" height="1"/><rect x="101" y="288" width="1" height="1"/><rect x="119" y="279" width="1" height="1"/><rect x="105" y="336" width="1" height="1"/><rect x="126" y="329" width="1" height="1"/><rect x="129" y="318" width="1" height="1"/><rect x="129" y="332" width="1" height="1"/><rect x="131" y="333" width="1" height="1"/><rect x="136" y="321" width="1" height="1"/><rect x="120" y="254" width="1" height="1"/><rect x="111" y="274" width="1" height="1"/><rect x="102" y="345" width="1" height="1"/><rect x="123" y="322" width="1" height="1"/><rect x="116" y="278" width="1" height="1"/><rect x="137" y="339" width="1" height="1"/><rect x="102" y="323" width="1" height="1"/><rect x="112" y="269" width="1" height="1"/><rect x="133" y="323" width="1" height="1"/><rect x="111" y="310" width="1" height="1"/><rect x="115" y="279" width="1" height="1"/><rect x="125" y="354" width="1" height="1"/><rect x="101" y="294" width="1" height="1"/><rect x="109" y="315" width="1" height="1"/><rect x="103" y="351" width="1" height="1"/><rect x="113" y="323" width="1" height="1"/><rect x="127" y="325" width="1" height="1"/><rect x="105" y="311" width="1" height="1"/><rect x="115" y="333" width="1" height="1"/><rect x="105" y="334" width="1" height="1"/><rect x="107" y="324" width="1" height="1"/><rect x="118" y="281" width="1" height="1"/><rect x="120" y="273" width="1" height="1"/><rect x="110" y="300" width="1" height="1"/><rect x="101" y="310" width="1" height="1"/><rect x="131" y="329" width="1" height="1"/><rect x="131" y="323" width="1" height="1"/><rect x="125" y="363" width="1" height="1"/><rect x="108" y="283" width="1" height="1"/><rect x="109" y="243" width="1" height="1"/><rect x="107" y="317" width="1" height="1"/><rect x="111" y="329" width="1" height="1"/><rect x="135" y="301" width="1" height="1"/><rect x="106" y="312" width="1" height="1"/><rect x="134" y="313" width="1" height="1"/><rect x="131" y="314" width="1" height="1"/><rect x="115" y="349" width="1" height="1"/><rect x="117" y="342" width="1" height="1"/><rect x="201" y="338" width="1" height="1"/><rect x="200" y="347" width="1" height="1"/><rect x="171" y="330" width="1" height="1"/><rect x="191" y="330" width="1" height="1"/><rect x="200" y="330" width="1" height="1"/><rect x="205" y="288" width="1" height="1"/><rect x="153" y="289" width="1" height="1"/><rect x="185" y="321" width="1" height="1"/><rect x="185" y="316" width="1" height="1"/><rect x="193" y="283" width="1" height="1"/><rect x="179" y="288" width="1" height="1"/><rect x="176" y="334" width="1" height="1"/><rect x="210" y="317" width="1" height="1"/><rect x="207" y="284" width="1" height="1"/><rect x="196" y="349" width="1" height="1"/><rect x="184" y="306" width="1" height="1"/><rect x="200" y="245" width="1" height="1"/><rect x="209" y="321" width="1" height="1"/><rect x="176" y="302" width="1" height="1"/><rect x="201" y="311" width="1" height="1"/><rect x="196" y="287" width="1" height="1"/><rect x="159" y="318" width="1" height="1"/><rect x="157" y="297" width="1" height="1"/><rect x="150" y="289" width="1" height="1"/><rect x="153" y="353" width="1" height="1"/><rect x="193" y="302" width="1" height="1"/><rect x="148" y="306" width="1" height="1"/><rect x="145" y="341" width="1" height="1"/><rect x="147" y="321" width="1" height="1"/><rect x="205" y="331" width="1" height="1"/><rect x="181" y="312" width="1" height="1"/><rect x="174" y="264" width="1" height="1"/><rect x="148" y="313" width="1" height="1"/><rect x="184" y="307" width="1" height="1"/><rect x="177" y="308" width="1" height="1"/><rect x="196" y="303" width="1" height="1"/><rect x="153" y="297" width="1" height="1"/><rect x="182" y="282" width="1" height="1"/><rect x="192" y="344" width="1" height="1"/><rect x="197" y="285" width="1" height="1"/><rect x="178" y="293" width="1" height="1"/><rect x="177" y="330" width="1" height="1"/><rect x="166" y="270" width="1" height="1"/><rect x="202" y="279" width="1" height="1"/><rect x="169" y="278" width="1" height="1"/><rect x="160" y="332" width="1" height="1"/><rect x="209" y="277" width="1" height="1"/><rect x="190" y="295" width="1" height="1"/><rect x="156" y="311" width="1" height="1"/><rect x="140" y="309" width="1" height="1"/><rect x="174" y="294" width="1" height="1"/><rect x="190" y="266" width="1" height="1"/><rect x="205" y="248" width="1" height="1"/><rect x="168" y="259" width="1" height="1"/><rect x="187" y="331" width="1" height="1"/><rect x="198" y="345" width="1" height="1"/><rect x="154" y="354" width="1" height="1"/><rect x="183" y="283" width="1" height="1"/><rect x="175" y="306" width="1" height="1"/><rect x="142" y="349" width="1" height="1"/><rect x="145" y="309" width="1" height="1"/><rect x="141" y="331" width="1" height="1"/><rect x="200" y="285" width="1" height="1"/><rect x="196" y="342" width="1" height="1"/><rect x="196" y="310" width="1" height="1"/><rect x="170" y="313" width="1" height="1"/><rect x="210" y="320" width="1" height="1"/><rect x="205" y="306" width="1" height="1"/><rect x="146" y="308" width="1" height="1"/><rect x="182" y="334" width="1" height="1"/><rect x="159" y="313" width="1" height="1"/><rect x="152" y="324" width="1" height="1"/><rect x="193" y="299" width="1" height="1"/><rect x="204" y="299" width="1" height="1"/><rect x="161" y="250" width="1" height="1"/><rect x="192" y="284" width="1" height="1"/><rect x="144" y="308" width="1" height="1"/><rect x="181" y="275" width="1" height="1"/><rect x="190" y="317" width="1" height="1"/><rect x="173" y="265" width="1" height="1"/><rect x="186" y="289" width="1" height="1"/><rect x="183" y="281" width="1" height="1"/><rect x="197" y="293" width="1" height="1"/><rect x="197" y="315" width="1" height="1"/><rect x="173" y="285" width="1" height="1"/><rect x="184" y="274" width="1" height="1"/><rect x="142" y="292" width="1" height="1"/><rect x="204" y="327" width="1" height="1"/><rect x="178" y="334" width="1" height="1"/><rect x="198" y="295" width="1" height="1"/><rect x="176" y="331" width="1" height="1"/><rect x="178" y="335" width="1" height="1"/><rect x="167" y="324" width="1" height="1"/><rect x="203" y="283" width="1" height="1"/><rect x="166" y="280" width="1" height="1"/><rect x="197" y="289" width="1" height="1"/><rect x="153" y="295" width="1" height="1"/><rect x="166" y="303" width="1" height="1"/><rect x="145" y="277" width="1" height="1"/><rect x="184" y="288" width="1" height="1"/><rect x="180" y="329" width="1" height="1"/><rect x="201" y="309" width="1" height="1"/><rect x="148" y="313" width="1" height="1"/><rect x="168" y="347" width="1" height="1"/><rect x="155" y="349" width="1" height="1"/><rect x="157" y="286" width="1" height="1"/><rect x="197" y="309" width="1" height="1"/><rect x="153" y="296" width="1" height="1"/><rect x="183" y="296" width="1" height="1"/><rect x="203" y="316" width="1" height="1"/><rect x="189" y="312" width="1" height="1"/><rect x="173" y="296" width="1" height="1"/><rect x="209" y="340" width="1" height="1"/><rect x="160" y="298" width="1" height="1"/><rect x="152" y="272" width="1" height="1"/><rect x="173" y="337" width="1" height="1"/><rect x="144" y="269" width="1" height="1"/><rect x="149" y="253" width="1" height="1"/><rect x="210" y="294" width="1" height="1"/><rect x="175" y="350" width="1" height="1"/><rect x="156" y="280" width="1" height="1"/><rect x="199" y="274" width="1" height="1"/><rect x="193" y="276" width="1" height="1"/><rect x="163" y="314" width="1" height="1"/><rect x="202" y="279" width="1" height="1"/><rect x="158" y="311" width="1" height="1"/><rect x="202" y="297" width="1" height="1"/><rect x="143" y="276" width="1" height="1"/><rect x="208" y="317" width="1" height="1"/><rect x="151" y="309" width="1" height="1"/><rect x="140" y="266" width="1" height="1"/><rect x="152" y="258" width="1" height="1"/><rect x="193" y="297" width="1" height="1"/><rect x="204" y="273" width="1" height="1"/><rect x="204" y="304" width="1" height="1"/><rect x="184" y="328" width="1" height="1"/><rect x="173" y="336" width="1" height="1"/><rect x="181" y="299" width="1" height="1"/><rect x="143" y="292" width="1" height="1"/><rect x="148" y="298" width="1" height="1"/><rect x="253" y="199" width="1" height="1"/><rect x="251" y="184" width="1" height="1"/><rect x="254" y="246" width="1" height="1"/><rect x="254" y="276" width="1" height="1"/><rect x="218" y="290" width="1" height="1"/><rect x="255" y="226" width="1" height="1"/><rect x="266" y="304" width="1" height="1"/><rect x="244" y="250" width="1" height="1"/><rect x="263" y="202" width="1" height="1"/><rect x="213" y="192" width="1" height="1"/><rect x="217" y="270" width="1" height="1"/><rect x="245" y="223" width="1" height="1"/><rect x="264" y="320" width="1" height="1"/><rect x="235" y="317" width="1" height="1"/><rect x="225" y="200" width="1" height="1"/><rect x="222" y="188" width="1" height="1"/><rect x="254" y="226" width="1" height="1"/><rect x="263" y="273" width="1" height="1"/><rect x="220" y="240" width="1" height="1"/><rect x="229" y="294" width="1" height="1"/><rect x="263" y="260" width="1" height="1"/><rect x="231" y="264" width="1" height="1"/><rect x="225" y="312" width="1" height="1"/><rect x="232" y="197" width="1" height="1"/><rect x="218" y="235" width="1" height="1"/><rect x="245" y="300" width="1" height="1"/><rect x="264" y="288" width="1" height="1"/><rect x="257" y="326" width="1" height="1"/><rect x="244" y="248" width="1" height="1"/><rect x="230" y="276" width="1" height="1"/><rect x="215" y="269" width="1" height="1"/><rect x="248" y="277" width="1" height="1"/><rect x="224" y="258" width="1" height="1"/><rect x="244" y="179" width="1" height="1"/><rect x="260" y="313" width="1" height="1"/><rect x="236" y="281" width="1" height="1"/><rect x="258" y="290" width="1" height="1"/><rect x="225" y="254" width="1" height="1"/><rect x="264" y="273" width="1" height="1"/><rect x="223" y="204" width="1" height="1"/><rect x="248" y="203" width="1" height="1"/><rect x="234" y="251" width="1" height="1"/><rect x="227" y="329" width="1" height="1"/><rect x="260" y="263" width="1" height="1"/><rect x="236" y="233" width="1" height="1"/><rect x="263" y="300" width="1" height="1"/><rect x="215" y="271" width="1" height="1"/><rect x="243" y="254" width="1" height="1"/><rect x="242" y="261" width="1" height="1"/><rect x="265" y="301" width="1" height="1"/><rect x="263" y="260" width="1" height="1"/><rect x="241" y="235" width="1" height="1"/><rect x="241" y="308" width="1" height="1"/><rect x="253" y="226" width="1" height="1"/><rect x="248" y="143" width="1" height="1"/><rect x="224" y="264" width="1" height="1"/><rect x="246" y="178" width="1" height="1"/><rect x="227" y="261" width="1" height="1"/><rect x="239" y="266" width="1" height="1"/><rect x="243" y="280" width="1" height="1"/><rect x="252" y="251" width="1" height="1"/><rect x="250" y="323" width="1" height="1"/><rect x="255" y="202" width="1" height="1"/><rect x="241" y="219" width="1" height="1"/><rect x="226" y="280" width="1" height="1"/><rect x="251" y="232" width="1" height="1"/><rect x="218" y="206" width="1" height="1"/><rect x="267" y="250" width="1" height="1"/><rect x="240" y="180" width="1" height="1"/><rect x="253" y="289" width="1" height="1"/><rect x="233" y="159" width="1" height="1"/><rect x="244" y="249" width="1" height="1"/><rect x="211" y="282" width="1" height="1"/><rect x="224" y="278" width="1" height="1"/><rect x="262" y="306" width="1" height="1"/><rect x="230" y="273" width="1" height="1"/><rect x="250" y="214" width="1" height="1"/><rect x="244" y="300" width="1" height="1"/><rect x="215" y="243" width="1" height="1"/><rect x="266" y="193" width="1" height="1"/><rect x="240" y="255" width="1" height="1"/><rect x="259" y="287" width="1" height="1"/><rect x="257" y="297" width="1" height="1"/><rect x="249" y="303" width="1" height="1"/><rect x="264" y="278" width="1" height="1"/><rect x="234" y="227" width="1" height="1"/><rect x="226" y="241" width="1" height="1"/><rect x="251" y="263" width="1" height="1"/><rect x="221" y="237" width="1" height="1"/><rect x="241" y="288" width="1" height="1"/><rect x="211" y="295" width="1" height="1"/><rect x="237" y="275" width="1" height="1"/><rect x="260" y="193" width="1" height="1"/><rect x="215" y="267" width="1" height="1"/><rect x="241" y="207" width="1" height="1"/><rect x="222" y="250" width="1" height="1"/><rect x="216" y="230" width="1" height="1"/><rect x="228" y="260" width="1" height="1"/><rect x="234" y="288" width="1" height="1"/><rect x="251" y="234" width="1" height="1"/><rect x="217" y="267" width="1" height="1"/><rect x="235" y="295" width="1" height="1"/><rect x="235" y="282" width="1" height="1"/><rect x="217" y="305" width="1" height="1"/><rect x="215" y="191" width="1" height="1"/><rect x="254" y="224" width="1" height="1"/><rect x="259" y="257" width="1" height="1"/><rect x="248" y="302" width="1" height="1"/><rect x="267" y="247" width="1" height="1"/><rect x="219" y="220" width="1" height="1"/><rect x="261" y="212" width="1" height="1"/><rect x="218" y="275" width="1" height="1"/><rect x="236" y="231" width="1" height="1"/><rect x="219" y="295" width="1" height="1"/><rect x="237" y="189" width="1" height="1"/><rect x="233" y="321" width="1" height="1"/><rect x="247" y="250" width="1" height="1"/><rect x="233" y="162" width="1" height="1"/><rect x="254" y="272" width="1" height="1"/><rect x="247" y="164" width="1" height="1"/><rect x="408" y="230" width="1" height="1"/><rect x="351" y="187" width="1" height="1"/><rect x="278" y="192" width="1" height="1"/><rect x="375" y="191" width="1" height="1"/><rect x="393" y="307" width="1" height="1"/><rect x="282" y="228" width="1" height="1"/><rect x="335" y="253" width="1" height="1"/><rect x="389" y="229" width="1" height="1"/><rect x="407" y="330" width="1" height="1"/><rect x="351" y="261" width="1" height="1"/><rect x="300" y="289" width="1" height="1"/><rect x="306" y="151" width="1" height="1"/><rect x="273" y="278" width="1" height="1"/><rect x="299" y="219" width="1" height="1"/><rect x="286" y="330" width="1" height="1"/><rect x="285" y="171" width="1" height="1"/><rect x="342" y="203" width="1" height="1"/><rect x="373" y="265" width="1" height="1"/><rect x="291" y="318" width="1" height="1"/><rect x="397" y="299" width="1" height="1"/><rect x="326" y="318" width="1" height="1"/><rect x="394" y="211" width="1" height="1"/><rect x="315" y="245" width="1" height="1"/><rect x="378" y="171" width="1" height="1"/><rect x="398" y="279" width="1" height="1"/><rect x="313" y="262" width="1" height="1"/><rect x="382" y="189" width="1" height="1"/><rect x="328" y="324" width="1" height="1"/><rect x="343" y="156" width="1" height="1"/><rect x="406" y="196" width="1" height="1"/><rect x="401" y="215" width="1" height="1"/><rect x="300" y="233" width="1" height="1"/><rect x="366" y="261" width="1" height="1"/><rect x="306" y="204" width="1" height="1"/><rect x="280" y="144" width="1" height="1"/><rect x="306" y="311" width="1" height="1"/><rect x="352" y="314" width="1" height="1"/><rect x="333" y="265" width="1" height="1"/><rect x="290" y="182" width="1" height="1"/><rect x="350" y="206" width="1" height="1"/><rect x="343" y="224" width="1" height="1"/><rect x="328" y="288" width="1" height="1"/><rect x="270" y="231" width="1" height="1"/><rect x="347" y="182" width="1" height="1"/><rect x="402" y="178" width="1" height="1"/><rect x="359" y="290" width="1" height="1"/><rect x="278" y="320" width="1" height="1"/><rect x="303" y="210" width="1" height="1"/><rect x="402" y="246" width="1" height="1"/><rect x="330" y="198" width="1" height="1"/><rect x="282" y="207" width="1" height="1"/><rect x="271" y="218" width="1" height="1"/><rect x="394" y="234" width="1" height="1"/><rect x="300" y="246" width="1" height="1"/><rect x="408" y="286" width="1" height="1"/><rect x="344" y="199" width="1" height="1"/><rect x="270" y="199" width="1" height="1"/><rect x="368" y="201" width="1" height="1"/><rect x="301" y="157" width="1" height="1"/><rect x="279" y="312" width="1" height="1"/><rect x="379" y="190" width="1" height="1"/><rect x="353" y="217" width="1" height="1"/><rect x="385" y="181" width="1" height="1"/><rect x="374" y="271" width="1" height="1"/><rect x="269" y="174" width="1" height="1"/><rect x="289" y="197" width="1" height="1"/><rect x="304" y="212" width="1" height="1"/><rect x="386" y="198" width="1" height="1"/><rect x="346" y="226" width="1" height="1"/><rect x="349" y="253" width="1" height="1"/><rect x="343" y="281" width="1" height="1"/><rect x="360" y="248" width="1" height="1"/><rect x="345" y="329" width="1" height="1"/><rect x="348" y="224" width="1" height="1"/><rect x="336" y="255" width="1" height="1"/><rect x="370" y="197" width="1" height="1"/><rect x="390" y="317" width="1" height="1"/><rect x="370" y="197" width="1" height="1"/><rect x="340" y="163" width="1" height="1"/><rect x="320" y="216" width="1" height="1"/><rect x="333" y="186" width="1" height="1"/><rect x="401" y="283" width="1" height="1"/><rect x="318" y="274" width="1" height="1"/><rect x="317" y="232" width="1" height="1"/><rect x="358" y="277" width="1" height="1"/><rect x="332" y="140" width="1" height="1"/><rect x="375" y="260" width="1" height="1"/><rect x="319" y="270" width="1" height="1"/><rect x="368" y="253" width="1" height="1"/><rect x="333" y="265" width="1" height="1"/><rect x="301" y="312" width="1" height="1"/><rect x="384" y="240" width="1" height="1"/><rect x="311" y="168" width="1" height="1"/><rect x="398" y="256" width="1" height="1"/><rect x="358" y="280" width="1" height="1"/><rect x="296" y="235" width="1" height="1"/><rect x="389" y="258" width="1" height="1"/><rect x="380" y="160" width="1" height="1"/><rect x="372" y="230" width="1" height="1"/><rect x="301" y="223" width="1" height="1"/><rect x="404" y="296" width="1" height="1"/><rect x="367" y="192" width="1" height="1"/><rect x="387" y="171" width="1" height="1"/><rect x="402" y="191" width="1" height="1"/><rect x="315" y="226" width="1" height="1"/><rect x="286" y="158" width="1" height="1"/><rect x="385" y="203" width="1" height="1"/><rect x="269" y="287" width="1" height="1"/><rect x="322" y="258" width="1" height="1"/><rect x="270" y="173" width="1" height="1"/><rect x="344" y="240" width="1" height="1"/><rect x="392" y="243" width="1" height="1"/><rect x="318" y="254" width="1" height="1"/><rect x="280" y="289" width="1" height="1"/><rect x="336" y="174" width="1" height="1"/><rect x="404" y="273" width="1" height="1"/><rect x="314" y="204" width="1" height="1"/><rect x="313" y="206" width="1" height="1"/><rect x="288" y="228" width="1" height="1"/><rect x="376" y="294" width="1" height="1"/><rect x="386" y="207" width="1" height="1"/><rect x="396" y="261" width="1" height="1"/><rect x="334" y="223" width="1" height="1"/><rect x="291" y="196" width="1" height="1"/><rect x="373" y="167" width="1" height="1"/><rect x="300" y="279" width="1" height="1"/><rect x="351" y="221" width="1" height="1"/><rect x="403" y="147" width="1" height="1"/><rect x="338" y="269" width="1" height="1"/><rect x="375" y="222" width="1" height="1"/><rect x="381" y="210" width="1" height="1"/><rect x="285" y="310" width="1" height="1"/><rect x="351" y="215" width="1" height="1"/><rect x="282" y="246" width="1" height="1"/><rect x="315" y="196" width="1" height="1"/><rect x="334" y="300" width="1" height="1"/><rect x="276" y="215" width="1" height="1"/><rect x="397" y="200" width="1" height="1"/><rect x="293" y="176" width="1" height="1"/><rect x="382" y="207" width="1" height="1"/><rect x="390" y="285" width="1" height="1"/><rect x="277" y="195" width="1" height="1"/><rect x="282" y="224" width="1" height="1"/><rect x="376" y="264" width="1" height="1"/><rect x="380" y="216" width="1" height="1"/><rect x="342" y="185" width="1" height="1"/><rect x="393" y="158" width="1" height="1"/><rect x="368" y="281" width="1" height="1"/><rect x="345" y="303" width="1" height="1"/><rect x="283" y="312" width="1" height="1"/><rect x="375" y="210" width="1" height="1"/><rect x="387" y="216" width="1" height="1"/><rect x="285" y="242" width="1" height="1"/><rect x="299" y="272" width="1" height="1"/><rect x="294" y="252" width="1" height="1"/><rect x="390" y="209" width="1" height="1"/><rect x="278" y="249" width="1" height="1"/><rect x="334" y="163" width="1" height="1"/><rect x="286" y="232" width="1" height="1"/><rect x="402" y="262" width="1" height="1"/><rect x="190" y="156" width="1" height="1"/><rect x="25" y="194" width="1" height="1"/><rect x="101" y="189" width="1" height="1"/><rect x="141" y="209" width="1" height="1"/><rect x="175" y="218" width="1" height="1"/><rect x="205" y="212" width="1" height="1"/><rect x="133" y="212" width="1" height="1"/><rect x="69" y="196" width="1" height="1"/><rect x="251" y="209" width="1" height="1"/><rect x="128" y="182" width="1" height="1"/><rect x="122" y="206" width="1" height="1"/><rect x="41" y="178" width="1" height="1"/><rect x="239" y="202" width="1" height="1"/><rect x="246" y="233" width="1" height="1"/><rect x="200" y="198" width="1" height="1"/><rect x="122" y="190" width="1" height="1"/><rect x="249" y="211" width="1" height="1"/><rect x="228" y="220" width="1" height="1"/><rect x="180" y="164" width="1" height="1"/><rect x="120" y="191" width="1" height="1"/><rect x="95" y="236" width="1" height="1"/><rect x="43" y="192" width="1" height="1"/><rect x="226" y="170" width="1" height="1"/><rect x="50" y="239" width="1" height="1"/><rect x="64" y="248" width="1" height="1"/><rect x="35" y="141" width="1" height="1"/><rect x="140" y="157" width="1" height="1"/><rect x="67" y="213" width="1" height="1"/><rect x="224" y="156" width="1" height="1"/><rect x="110" y="247" width="1" height="1"/><rect x="88" y="194" width="1" height="1"/><rect x="29" y="189" width="1" height="1"/><rect x="218" y="245" width="1" height="1"/><rect x="194" y="233" width="1" height="1"/><rect x="255" y="161" width="1" height="1"/><rect x="192" y="224" width="1" height="1"/><rect x="207" y="247" width="1" height="1"/><rect x="178" y="186" width="1" height="1"/><rect x="159" y="220" width="1" height="1"/><rect x="19" y="207" width="1" height="1"/><rect x="52" y="121" width="1" height="1"/><rect x="54" y="131" width="1" height="1"/><rect x="100" y="116" width="1" height="1"/><rect x="156" y="118" width="1" height="1"/><rect x="286" y="108" width="1" height="1"/><rect x="324" y="107" width="1" height="1"/><rect x="402" y="130" width="1" height="1"/></g><polyline fill="none" stroke="#1cb4ec" stroke-width="1" shape-rendering="crispEdges" points="14.5,185.5 16.5,165.5 18.5,232.5 21.5,160.5 24.5,202.5 26.5,262.5 29.5,188.5 31.5,234.5 33.5,162.5 35.5,254.5 37.5,173.5 39.5,168.5 41.5,253.5 45.5,233.5 47.5,267.5 50.5,201.5 52.5,249.5 54.5,177.5 56.5,251.5 59.5,179.5 62.5,251.5 66.5,238.5 68.5,170.5 70.5,240.5 73.5,194.5 75.5,170.5 77.5,268.5 79.5,170.5 83.5,233.5 86.5,285.5 89.5,237.5 91.5,241.5 94.5,292.5 100.5,302.5 104.5,184.5 106.5,231.5 109.5,192.5 111.5,252.5 113.5,200.5 114.5,233.5 115.5,183.5 117.5,256.5 119.5,178.5 122.5,250.5 125.5,211.5 127.5,200.5 131.5,245.5 133.5,201.5 136.5,185.5 139.5,251.5 140.5,172.5 142.5,260.5 144.5,183.5 146.5,246.5 150.5,198.5 154.5,288.5 157.5,252.5 159.5,233.5 162.5,180.5 166.5,247.5 168.5,196.5 171.5,236.5 174.5,192.5 177.5,187.5 180.5,246.5 182.5,179.5 185.5,195.5 187.5,206.5 189.5,241.5 192.5,192.5 194.5,238.5 197.5,202.5 198.5,255.5 200.5,238.5 203.5,175.5 205.5,247.5 208.5,203.5 210.5,203.5 213.5,209.5 216.5,242.5 218.5,186.5 219.5,189.5 220.5,249.5 224.5,197.5 226.5,236.5 230.5,239.5 234.5,218.5 238.5,250.5 239.5,209.5 241.5,260.5 243.5,210.5 244.5,223.5 247.5,257.5 249.5,221.5 252.5,245.5 254.5,255.5 257.5,227.5 259.5,233.5 261.5,274.5 262.5,233.5 266.5,310.5 270.5,258.5 272.5,267.5 273.5,259.5 274.5,242.5 277.5,266.5 280.5,228.5 282.5,229.5 284.5,277.5 286.5,293.5 290.5,255.5 291.5,276.5 294.5,246.5 297.5,290.5 300.5,235.5 302.5,286.5 304.5,248.5 306.5,243.5 308.5,276.5 311.5,285.5 313.5,251.5 317.5,277.5 321.5,251.5 324.5,297.5 328.5,248.5 331.5,297.5 333.5,269.5 336.5,306.5 340.5,332.5 343.5,363.5 346.5,338.5 349.5,282.5 351.5,322.5 352.5,299.5 355.5,328.5 358.5,336.5 360.5,444.5 363.5,292.5 365.5,343.5 367.5,346.5 370.5,308.5 374.5,330.5 375.5,313.5 378.5,373.5 380.5,332.5 381.5,301.5 382.5,345.5 384.5,293.5 387.5,346.5 389.5,357.5 391.5,306.5 396.5,378.5 398.5,358.5 401.5,322.5 403.5,359.5 407.5,312.5 409.5,365.5"/></svg>
<div class="t" style="left:613px;top:123.5px;font-size:12px;color:#000;transform:scaleX(0.865);transform-origin:left top;">MB/s</div>
<div class="t" style="left:608px;width:400px;text-align:right;top:123.5px;font-size:12px;color:#000;transform:scaleX(0.865);transform-origin:right top;">ms</div>
<div class="t" style="left:208.5px;width:400px;text-align:right;top:131.5px;font-size:12px;color:#000;transform:scaleX(0.865);transform-origin:right top;">90</div>
<div class="t" style="left:208.5px;width:400px;text-align:right;top:165.75px;font-size:12px;color:#000;transform:scaleX(0.865);transform-origin:right top;">80</div>
<div class="t" style="left:208.5px;width:400px;text-align:right;top:200.0px;font-size:12px;color:#000;transform:scaleX(0.865);transform-origin:right top;">70</div>
<div class="t" style="left:208.5px;width:400px;text-align:right;top:234.25px;font-size:12px;color:#000;transform:scaleX(0.865);transform-origin:right top;">60</div>
<div class="t" style="left:208.5px;width:400px;text-align:right;top:268.5px;font-size:12px;color:#000;transform:scaleX(0.865);transform-origin:right top;">50</div>
<div class="t" style="left:208.5px;width:400px;text-align:right;top:302.75px;font-size:12px;color:#000;transform:scaleX(0.865);transform-origin:right top;">40</div>
<div class="t" style="left:208.5px;width:400px;text-align:right;top:337.0px;font-size:12px;color:#000;transform:scaleX(0.865);transform-origin:right top;">30</div>
<div class="t" style="left:208.5px;width:400px;text-align:right;top:371.25px;font-size:12px;color:#000;transform:scaleX(0.865);transform-origin:right top;">20</div>
<div class="t" style="left:208.5px;width:400px;text-align:right;top:405.5px;font-size:12px;color:#000;transform:scaleX(0.865);transform-origin:right top;">10</div>
<div class="t" style="left:1014px;top:131.5px;font-size:12px;color:#000;transform:scaleX(0.865);transform-origin:left top;">45</div>
<div class="t" style="left:1014px;top:165.75px;font-size:12px;color:#000;transform:scaleX(0.865);transform-origin:left top;">40</div>
<div class="t" style="left:1014px;top:200.0px;font-size:12px;color:#000;transform:scaleX(0.865);transform-origin:left top;">35</div>
<div class="t" style="left:1014px;top:234.25px;font-size:12px;color:#000;transform:scaleX(0.865);transform-origin:left top;">30</div>
<div class="t" style="left:1014px;top:268.5px;font-size:12px;color:#000;transform:scaleX(0.865);transform-origin:left top;">25</div>
<div class="t" style="left:1014px;top:302.75px;font-size:12px;color:#000;transform:scaleX(0.865);transform-origin:left top;">20</div>
<div class="t" style="left:1014px;top:337.0px;font-size:12px;color:#000;transform:scaleX(0.865);transform-origin:left top;">15</div>
<div class="t" style="left:1014px;top:371.25px;font-size:12px;color:#000;transform:scaleX(0.865);transform-origin:left top;">10</div>
<div class="t" style="left:1014px;top:405.5px;font-size:12px;color:#000;transform:scaleX(0.865);transform-origin:left top;">5</div>
<div class="t" style="left:414.0px;width:400px;text-align:center;top:450.5px;font-size:12px;color:#000;transform:scaleX(0.865);transform-origin:center top;">0</div>
<div class="t" style="left:453.5px;width:400px;text-align:center;top:450.5px;font-size:12px;color:#000;transform:scaleX(0.865);transform-origin:center top;">32</div>
<div class="t" style="left:493.0px;width:400px;text-align:center;top:450.5px;font-size:12px;color:#000;transform:scaleX(0.865);transform-origin:center top;">64</div>
<div class="t" style="left:532.5px;width:400px;text-align:center;top:450.5px;font-size:12px;color:#000;transform:scaleX(0.865);transform-origin:center top;">96</div>
<div class="t" style="left:572.0px;width:400px;text-align:center;top:450.5px;font-size:12px;color:#000;transform:scaleX(0.865);transform-origin:center top;">128</div>
<div class="t" style="left:611.5px;width:400px;text-align:center;top:450.5px;font-size:12px;color:#000;transform:scaleX(0.865);transform-origin:center top;">160</div>
<div class="t" style="left:651.0px;width:400px;text-align:center;top:450.5px;font-size:12px;color:#000;transform:scaleX(0.865);transform-origin:center top;">192</div>
<div class="t" style="left:690.5px;width:400px;text-align:center;top:450.5px;font-size:12px;color:#000;transform:scaleX(0.865);transform-origin:center top;">224</div>
<div class="t" style="left:730.0px;width:400px;text-align:center;top:450.5px;font-size:12px;color:#000;transform:scaleX(0.865);transform-origin:center top;">256</div>
<div class="t" style="left:769.5px;width:400px;text-align:center;top:450.5px;font-size:12px;color:#000;transform:scaleX(0.865);transform-origin:center top;">288</div>
<div class="t" style="left:992.5px;top:450.5px;font-size:12px;color:#000;transform:scaleX(0.865);transform-origin:left top;">320gB</div>
<div class="r" style="left:1046px;top:119px;width:73px;height:21px;box-sizing:border-box;border:1px solid #3c8ee0;background:linear-gradient(#eeeeee,#dedede);"></div>
<div class="t" style="left:882px;width:400px;text-align:center;top:123px;font-size:12px;color:#000;transform:scaleX(0.865);transform-origin:center top;">Start</div>
<div class="r" style="left:1037px;top:150px;width:102px;height:1px;background:#a0a0a0;"></div>
<svg class="r" style="left:1042px;top:156px;" width="13" height="13" viewBox="0 0 13 13"><circle cx="6.5" cy="6.5" r="5.8" fill="#fff" stroke="#333" stroke-width="1"/><circle cx="6.5" cy="6.5" r="3.2" fill="#111"/></svg>
<div class="t" style="left:1058.5px;top:156px;font-size:12px;color:#000;letter-spacing:-0.3px;">Read</div>
<svg class="r" style="left:1042px;top:172px;" width="13" height="13" viewBox="0 0 13 13"><circle cx="6.5" cy="6.5" r="5.8" fill="#fff" stroke="#333" stroke-width="1"/></svg>
<div class="t" style="left:1058.5px;top:171.5px;font-size:12px;color:#000;letter-spacing:-0.3px;">Write</div>
<div class="r" style="left:1037px;top:189px;width:102px;height:1px;background:#a0a0a0;"></div>
<div class="r" style="left:1042px;top:197px;width:13px;height:13px;box-sizing:border-box;border:1px solid #333;background:#fff;"></div>
<div class="t" style="left:1057.5px;top:197px;font-size:12px;color:#000;transform:scaleX(0.865);transform-origin:left top;">Short stroke</div>
<div class="r" style="left:1042px;top:217px;width:62px;height:20px;box-sizing:border-box;border:1px solid #acacac;background:#fff;"></div>
<div class="t" style="left:1045px;top:221px;font-size:12px;color:#8a8a8a;letter-spacing:-0.5px;">40</div>
<div class="r" style="left:1086px;top:218px;width:17px;height:9px;box-sizing:border-box;border:1px solid #c8c8c8;background:linear-gradient(#f2f2f2,#e4e4e4);"></div>
<div class="r" style="left:1086px;top:227px;width:17px;height:9px;box-sizing:border-box;border:1px solid #c8c8c8;background:linear-gradient(#f2f2f2,#e4e4e4);"></div>
<svg class="r" style="left:1090px;top:218px;" width="8" height="18" viewBox="0 0 8 18"><path d="M1 6.5 L4 3.0 L7 6.5 Z" fill="#222"/><path d="M1 12.0 L4 15.5 L7 12.0 Z" fill="#222"/></svg>
<div class="t" style="left:1114.5px;top:220px;font-size:12px;color:#000;letter-spacing:-0.3px;">gB</div>
<div class="r" style="left:1042px;top:246px;width:13px;height:13px;box-sizing:border-box;border:1px solid #333;background:#fff;"></div>
<svg class="r" style="left:1042px;top:246px;" width="13" height="13" viewBox="0 0 13 13"><path d="M2.5 6.5 L5 9.5 L10.5 3" fill="none" stroke="#000" stroke-width="1.8"/></svg>
<div class="t" style="left:1057.5px;top:245.5px;font-size:12px;color:#000;transform:scaleX(0.865);transform-origin:left top;">Transfer rate</div>
<div class="r" style="left:1037px;top:261px;width:102px;height:1px;background:#a0a0a0;"></div>
<div class="t" style="left:1041.5px;top:264px;font-size:12px;color:#000;transform:scaleX(0.865);transform-origin:left top;">Minimum</div>
<div class="r" style="left:1043px;top:280px;width:91px;height:14px;background:#000;"></div>
<div class="t" style="left:888.5px;width:400px;text-align:center;top:280.5px;font-size:12px;color:#22c4ff;font-weight:bold;letter-spacing:0.3px;">0.9 MB/s</div>
<div class="t" style="left:1041.5px;top:297px;font-size:12px;color:#000;transform:scaleX(0.865);transform-origin:left top;">Maximum</div>
<div class="r" style="left:1043px;top:312px;width:91px;height:14px;background:#000;"></div>
<div class="t" style="left:888.5px;width:400px;text-align:center;top:312.5px;font-size:12px;color:#22c4ff;font-weight:bold;letter-spacing:0.3px;">84.0 MB/s</div>
<div class="t" style="left:1041.5px;top:327px;font-size:12px;color:#000;transform:scaleX(0.865);transform-origin:left top;">Average</div>
<div class="r" style="left:1043px;top:343px;width:91px;height:14px;background:#000;"></div>
<div class="t" style="left:888.5px;width:400px;text-align:center;top:343.5px;font-size:12px;color:#22c4ff;font-weight:bold;letter-spacing:0.3px;">54.6 MB/s</div>
<div class="r" style="left:1037px;top:365px;width:102px;height:1px;background:#a0a0a0;"></div>
<div class="r" style="left:1042px;top:372px;width:13px;height:13px;box-sizing:border-box;border:1px solid #333;background:#fff;"></div>
<svg class="r" style="left:1042px;top:372px;" width="13" height="13" viewBox="0 0 13 13"><path d="M2.5 6.5 L5 9.5 L10.5 3" fill="none" stroke="#000" stroke-width="1.8"/></svg>
<div class="t" style="left:1057.5px;top:371px;font-size:12px;color:#000;transform:scaleX(0.865);transform-origin:left top;">Access time</div>
<div class="r" style="left:1043px;top:386px;width:91px;height:14px;background:#000;"></div>
<div class="t" style="left:888.5px;width:400px;text-align:center;top:386.5px;font-size:12px;color:#ffff20;font-weight:bold;letter-spacing:0.3px;">25.7 ms</div>
<div class="r" style="left:1042px;top:406px;width:13px;height:13px;box-sizing:border-box;border:1px solid #333;background:#fff;"></div>
<svg class="r" style="left:1042px;top:406px;" width="13" height="13" viewBox="0 0 13 13"><path d="M2.5 6.5 L5 9.5 L10.5 3" fill="none" stroke="#000" stroke-width="1.8"/></svg>
<div class="t" style="left:1057.5px;top:404.5px;font-size:12px;color:#000;transform:scaleX(0.865);transform-origin:left top;">Burst rate</div>
<div class="r" style="left:1043px;top:421px;width:91px;height:14px;background:#000;"></div>
<div class="t" style="left:888.5px;width:400px;text-align:center;top:421.5px;font-size:12px;color:#ffffff;font-weight:bold;letter-spacing:0.3px;">103.6 MB/s</div>
<div class="t" style="left:1041px;top:437.5px;font-size:12px;color:#000;transform:scaleX(0.865);transform-origin:left top;">CPU usage</div>
<div class="r" style="left:1043px;top:454px;width:91px;height:14px;background:#000;"></div>
<div class="t" style="left:888.5px;width:400px;text-align:center;top:454.5px;font-size:12px;color:#ffffff;font-weight:bold;letter-spacing:0.3px;">8.8%</div>
<div class="r" style="left:574px;top:0px;width:1px;height:480px;background:#6d9fd8;"></div>
<div class="r" style="left:0px;top:479px;width:574px;height:1px;background:#5b96d6;"></div>
</body></html>
